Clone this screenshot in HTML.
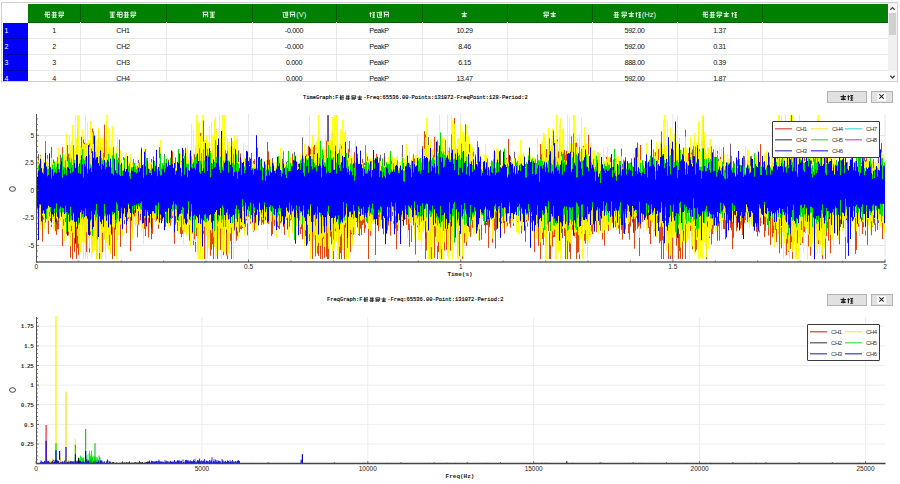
<!DOCTYPE html><html><head><meta charset="utf-8"><style>
*{margin:0;padding:0;box-sizing:border-box}
html,body{width:900px;height:484px;overflow:hidden;background:#fff}
body{position:relative;font-family:"Liberation Sans",sans-serif;color:#222}
.a{position:absolute}
.cj{display:inline-block;position:relative;border:1px solid;vertical-align:middle;margin:0 0.5px}
.cj b{position:absolute;left:1px;right:1px;top:50%;height:1px;margin-top:-0.5px}
.hd{position:absolute;top:4px;height:19px;color:#f0f8f0;font-size:7.5px;line-height:19px;text-align:center;white-space:nowrap}
.cell{position:absolute;height:16px;font-size:7.2px;line-height:18px;text-align:center;white-space:nowrap;color:#111;letter-spacing:-0.35px}
.rn{position:absolute;left:4.5px;font-size:7px;color:#fff;line-height:17.5px}
.mono{font-family:"Liberation Mono",monospace}
.lab{position:absolute;font-size:6.5px;line-height:7px;color:#222;white-space:nowrap}
.btn{position:absolute;background:#e1e1e1;border:1px solid #b4b4b4}
</style></head><body><div class="a" style="left:1px;top:2px;width:897px;height:81px;border:1px solid #cfcfcf;border-top-width:1px"></div><div class="a" style="left:28px;top:4px;width:860px;height:19px;background:#008000"></div><div class="a" style="left:80px;top:4px;width:1px;height:19px;background:#005a00"></div><div class="a" style="left:166px;top:4px;width:1px;height:19px;background:#005a00"></div><div class="a" style="left:252px;top:4px;width:1px;height:19px;background:#005a00"></div><div class="a" style="left:336px;top:4px;width:1px;height:19px;background:#005a00"></div><div class="a" style="left:422px;top:4px;width:1px;height:19px;background:#005a00"></div><div class="a" style="left:507px;top:4px;width:1px;height:19px;background:#005a00"></div><div class="a" style="left:592px;top:4px;width:1px;height:19px;background:#005a00"></div><div class="a" style="left:677px;top:4px;width:1px;height:19px;background:#005a00"></div><div class="a" style="left:762px;top:4px;width:1px;height:19px;background:#005a00"></div><div class="a" style="left:28px;top:22px;width:860px;height:1px;background:#006000"></div><div class="a" style="left:3px;top:23px;width:25px;height:58px;background:#0000ff"></div><div class="a" style="left:3px;top:38px;width:25px;height:1px;background:#0000a8"></div><div class="a" style="left:3px;top:54px;width:25px;height:1px;background:#0000a8"></div><div class="a" style="left:3px;top:70px;width:25px;height:1px;background:#0000a8"></div><div class="a" style="left:28px;top:38px;width:860px;height:1px;background:#e9e9e9"></div><div class="a" style="left:28px;top:54px;width:860px;height:1px;background:#e9e9e9"></div><div class="a" style="left:28px;top:70px;width:860px;height:1px;background:#e9e9e9"></div><div class="a" style="left:80px;top:22px;width:1px;height:59px;background:#e9e9e9"></div><div class="a" style="left:166px;top:22px;width:1px;height:59px;background:#e9e9e9"></div><div class="a" style="left:252px;top:22px;width:1px;height:59px;background:#e9e9e9"></div><div class="a" style="left:336px;top:22px;width:1px;height:59px;background:#e9e9e9"></div><div class="a" style="left:422px;top:22px;width:1px;height:59px;background:#e9e9e9"></div><div class="a" style="left:507px;top:22px;width:1px;height:59px;background:#e9e9e9"></div><div class="a" style="left:592px;top:22px;width:1px;height:59px;background:#e9e9e9"></div><div class="a" style="left:677px;top:22px;width:1px;height:59px;background:#e9e9e9"></div><div class="a" style="left:762px;top:22px;width:1px;height:59px;background:#e9e9e9"></div><div class="hd" style="left:28px;width:52px"><svg width="6.6" height="7" viewBox="-0.5 -0.5 7 7" style="vertical-align:middle;margin:0 0.3px;opacity:0.95"><path d="M0.5 0.5H2.5M1.5 0.5V6M0 3H2.5M3 0.5H6V6H3ZM3 3H6" fill="none" stroke="#f4fff4" stroke-width="1.0"/></svg><svg width="6.6" height="7" viewBox="-0.5 -0.5 7 7" style="vertical-align:middle;margin:0 0.3px;opacity:0.95"><path d="M0.5 1H5.5M2 0V6M4 0V6M0 3.5H6M0.5 6H5.5" fill="none" stroke="#f4fff4" stroke-width="1.0"/></svg><svg width="6.6" height="7" viewBox="-0.5 -0.5 7 7" style="vertical-align:middle;margin:0 0.3px;opacity:0.95"><path d="M0.5 0.5H5.5V2.5H0.5ZM0 4H6M3.5 4V6H2M1.5 4L0.5 6" fill="none" stroke="#f4fff4" stroke-width="1.0"/></svg></div><div class="hd" style="left:80px;width:86px"><svg width="6.6" height="7" viewBox="-0.5 -0.5 7 7" style="vertical-align:middle;margin:0 0.3px;opacity:0.95"><path d="M0 0.5H6M3 0.5V6M0.5 2.5H5.5M1 4.5H5M0.5 6H5.5" fill="none" stroke="#f4fff4" stroke-width="1.0"/></svg><svg width="6.6" height="7" viewBox="-0.5 -0.5 7 7" style="vertical-align:middle;margin:0 0.3px;opacity:0.95"><path d="M0.5 0.5H2.5M1.5 0.5V6M0 3H2.5M3 0.5H6V6H3ZM3 3H6" fill="none" stroke="#f4fff4" stroke-width="1.0"/></svg><svg width="6.6" height="7" viewBox="-0.5 -0.5 7 7" style="vertical-align:middle;margin:0 0.3px;opacity:0.95"><path d="M0.5 1H5.5M2 0V6M4 0V6M0 3.5H6M0.5 6H5.5" fill="none" stroke="#f4fff4" stroke-width="1.0"/></svg><svg width="6.6" height="7" viewBox="-0.5 -0.5 7 7" style="vertical-align:middle;margin:0 0.3px;opacity:0.95"><path d="M0.5 0.5H5.5V2.5H0.5ZM0 4H6M3.5 4V6H2M1.5 4L0.5 6" fill="none" stroke="#f4fff4" stroke-width="1.0"/></svg></div><div class="hd" style="left:166px;width:86px"><svg width="6.6" height="7" viewBox="-0.5 -0.5 7 7" style="vertical-align:middle;margin:0 0.3px;opacity:0.95"><path d="M0 0.5H6M1 0.5V6M1 3H5.5V6M5.5 0.5V3M2.5 4.5H4" fill="none" stroke="#f4fff4" stroke-width="1.0"/></svg><svg width="6.6" height="7" viewBox="-0.5 -0.5 7 7" style="vertical-align:middle;margin:0 0.3px;opacity:0.95"><path d="M0 0.5H6M3 0.5V6M0.5 2.5H5.5M1 4.5H5M0.5 6H5.5" fill="none" stroke="#f4fff4" stroke-width="1.0"/></svg></div><div class="hd" style="left:252px;width:84px"><svg width="6.6" height="7" viewBox="-0.5 -0.5 7 7" style="vertical-align:middle;margin:0 0.3px;opacity:0.95"><path d="M0 1H2.5M1 2V6H6M3 0.5H6M3.5 0.5V4.5H5.5V0.5M3.5 2.5H5.5" fill="none" stroke="#f4fff4" stroke-width="1.0"/></svg><svg width="6.6" height="7" viewBox="-0.5 -0.5 7 7" style="vertical-align:middle;margin:0 0.3px;opacity:0.95"><path d="M0 0.5H6M1 0.5V6M1 3H5.5V6M5.5 0.5V3M2.5 4.5H4" fill="none" stroke="#f4fff4" stroke-width="1.0"/></svg><span style="vertical-align:middle">(V)</span></div><div class="hd" style="left:336px;width:86px"><svg width="6.6" height="7" viewBox="-0.5 -0.5 7 7" style="vertical-align:middle;margin:0 0.3px;opacity:0.95"><path d="M1 0.5V6M0 2H2.5M3 1H6M4.5 1V6M3 3.5H6M3 6H6" fill="none" stroke="#f4fff4" stroke-width="1.0"/></svg><svg width="6.6" height="7" viewBox="-0.5 -0.5 7 7" style="vertical-align:middle;margin:0 0.3px;opacity:0.95"><path d="M0 1H2.5M1 2V6H6M3 0.5H6M3.5 0.5V4.5H5.5V0.5M3.5 2.5H5.5" fill="none" stroke="#f4fff4" stroke-width="1.0"/></svg><svg width="6.6" height="7" viewBox="-0.5 -0.5 7 7" style="vertical-align:middle;margin:0 0.3px;opacity:0.95"><path d="M0 0.5H6M1 0.5V6M1 3H5.5V6M5.5 0.5V3M2.5 4.5H4" fill="none" stroke="#f4fff4" stroke-width="1.0"/></svg></div><div class="hd" style="left:422px;width:85px"><svg width="6.6" height="7" viewBox="-0.5 -0.5 7 7" style="vertical-align:middle;margin:0 0.3px;opacity:0.95"><path d="M3 0V2M0 2H6M1 3.5H5M0.5 5H5.5M3 2V6" fill="none" stroke="#f4fff4" stroke-width="1.0"/></svg></div><div class="hd" style="left:507px;width:85px"><svg width="6.6" height="7" viewBox="-0.5 -0.5 7 7" style="vertical-align:middle;margin:0 0.3px;opacity:0.95"><path d="M0.5 0.5H5.5V2.5H0.5ZM0 4H6M3.5 4V6H2M1.5 4L0.5 6" fill="none" stroke="#f4fff4" stroke-width="1.0"/></svg><svg width="6.6" height="7" viewBox="-0.5 -0.5 7 7" style="vertical-align:middle;margin:0 0.3px;opacity:0.95"><path d="M3 0V2M0 2H6M1 3.5H5M0.5 5H5.5M3 2V6" fill="none" stroke="#f4fff4" stroke-width="1.0"/></svg></div><div class="hd" style="left:592px;width:85px"><svg width="6.6" height="7" viewBox="-0.5 -0.5 7 7" style="vertical-align:middle;margin:0 0.3px;opacity:0.95"><path d="M0.5 1H5.5M2 0V6M4 0V6M0 3.5H6M0.5 6H5.5" fill="none" stroke="#f4fff4" stroke-width="1.0"/></svg><svg width="6.6" height="7" viewBox="-0.5 -0.5 7 7" style="vertical-align:middle;margin:0 0.3px;opacity:0.95"><path d="M0.5 0.5H5.5V2.5H0.5ZM0 4H6M3.5 4V6H2M1.5 4L0.5 6" fill="none" stroke="#f4fff4" stroke-width="1.0"/></svg><svg width="6.6" height="7" viewBox="-0.5 -0.5 7 7" style="vertical-align:middle;margin:0 0.3px;opacity:0.95"><path d="M3 0V2M0 2H6M1 3.5H5M0.5 5H5.5M3 2V6" fill="none" stroke="#f4fff4" stroke-width="1.0"/></svg><svg width="6.6" height="7" viewBox="-0.5 -0.5 7 7" style="vertical-align:middle;margin:0 0.3px;opacity:0.95"><path d="M1 0.5V6M0 2H2.5M3 1H6M4.5 1V6M3 3.5H6M3 6H6" fill="none" stroke="#f4fff4" stroke-width="1.0"/></svg><span style="vertical-align:middle">(Hz)</span></div><div class="hd" style="left:677px;width:85px"><svg width="6.6" height="7" viewBox="-0.5 -0.5 7 7" style="vertical-align:middle;margin:0 0.3px;opacity:0.95"><path d="M0.5 0.5H2.5M1.5 0.5V6M0 3H2.5M3 0.5H6V6H3ZM3 3H6" fill="none" stroke="#f4fff4" stroke-width="1.0"/></svg><svg width="6.6" height="7" viewBox="-0.5 -0.5 7 7" style="vertical-align:middle;margin:0 0.3px;opacity:0.95"><path d="M0.5 1H5.5M2 0V6M4 0V6M0 3.5H6M0.5 6H5.5" fill="none" stroke="#f4fff4" stroke-width="1.0"/></svg><svg width="6.6" height="7" viewBox="-0.5 -0.5 7 7" style="vertical-align:middle;margin:0 0.3px;opacity:0.95"><path d="M0.5 0.5H5.5V2.5H0.5ZM0 4H6M3.5 4V6H2M1.5 4L0.5 6" fill="none" stroke="#f4fff4" stroke-width="1.0"/></svg><svg width="6.6" height="7" viewBox="-0.5 -0.5 7 7" style="vertical-align:middle;margin:0 0.3px;opacity:0.95"><path d="M3 0V2M0 2H6M1 3.5H5M0.5 5H5.5M3 2V6" fill="none" stroke="#f4fff4" stroke-width="1.0"/></svg><svg width="6.6" height="7" viewBox="-0.5 -0.5 7 7" style="vertical-align:middle;margin:0 0.3px;opacity:0.95"><path d="M1 0.5V6M0 2H2.5M3 1H6M4.5 1V6M3 3.5H6M3 6H6" fill="none" stroke="#f4fff4" stroke-width="1.0"/></svg></div><div class="rn" style="top:22px">1</div><div class="cell" style="left:28px;width:52px;top:22px">1</div><div class="cell" style="left:80px;width:86px;top:22px">CH1</div><div class="cell" style="left:252px;width:84px;top:22px">-0.000</div><div class="cell" style="left:336px;width:86px;top:22px">PeakP</div><div class="cell" style="left:422px;width:85px;top:22px">10.29</div><div class="cell" style="left:592px;width:85px;top:22px">592.00</div><div class="cell" style="left:677px;width:85px;top:22px">1.37</div><div class="rn" style="top:38px">2</div><div class="cell" style="left:28px;width:52px;top:38px">2</div><div class="cell" style="left:80px;width:86px;top:38px">CH2</div><div class="cell" style="left:252px;width:84px;top:38px">-0.000</div><div class="cell" style="left:336px;width:86px;top:38px">PeakP</div><div class="cell" style="left:422px;width:85px;top:38px">8.46</div><div class="cell" style="left:592px;width:85px;top:38px">592.00</div><div class="cell" style="left:677px;width:85px;top:38px">0.31</div><div class="rn" style="top:54px">3</div><div class="cell" style="left:28px;width:52px;top:54px">3</div><div class="cell" style="left:80px;width:86px;top:54px">CH3</div><div class="cell" style="left:252px;width:84px;top:54px">0.000</div><div class="cell" style="left:336px;width:86px;top:54px">PeakP</div><div class="cell" style="left:422px;width:85px;top:54px">6.15</div><div class="cell" style="left:592px;width:85px;top:54px">888.00</div><div class="cell" style="left:677px;width:85px;top:54px">0.39</div><div class="rn" style="top:70px">4</div><div class="cell" style="left:28px;width:52px;top:70px">4</div><div class="cell" style="left:80px;width:86px;top:70px">CH4</div><div class="cell" style="left:252px;width:84px;top:70px">0.000</div><div class="cell" style="left:336px;width:86px;top:70px">PeakP</div><div class="cell" style="left:422px;width:85px;top:70px">13.47</div><div class="cell" style="left:592px;width:85px;top:70px">592.00</div><div class="cell" style="left:677px;width:85px;top:70px">1.87</div><div class="a" style="left:2px;top:82px;width:897px;height:3px;background:#fff"></div><div class="a" style="left:1px;top:81px;width:897px;height:1px;background:#cfcfcf"></div><div class="a" style="left:888px;top:3px;width:9px;height:78px;background:#f0f0f0"></div><div class="a" style="left:889px;top:13px;width:7px;height:22px;background:#d0d0d0"></div><svg class="a" style="left:888px;top:3px" width="9" height="78"><rect x="0" y="1" width="9" height="9" fill="#f8f8f8"/><rect x="0" y="68" width="9" height="10" fill="#f8f8f8"/><path d="M2.3 6.8 L4.5 4.6 L6.7 6.8" fill="none" stroke="#444" stroke-width="1.3"/><path d="M2.3 72.8 L4.5 75 L6.7 72.8" fill="none" stroke="#444" stroke-width="1.3"/></svg><div class="a mono" style="left:303px;top:94px;height:8px;line-height:8px;font-size:5.38px;color:#000;white-space:nowrap;font-weight:normal;-webkit-text-stroke:0.15px #000">TimeGraph:F<svg width="5.6" height="5.6" viewBox="-0.5 -0.5 7 7" style="vertical-align:middle;margin:0 0.3px;opacity:1.0"><path d="M0.5 0.5H2.5M1.5 0.5V6M0 3H2.5M3 0.5H6V6H3ZM3 3H6" fill="none" stroke="#111" stroke-width="1.0"/></svg><svg width="5.6" height="5.6" viewBox="-0.5 -0.5 7 7" style="vertical-align:middle;margin:0 0.3px;opacity:1.0"><path d="M0.5 1H5.5M2 0V6M4 0V6M0 3.5H6M0.5 6H5.5" fill="none" stroke="#111" stroke-width="1.0"/></svg><svg width="5.6" height="5.6" viewBox="-0.5 -0.5 7 7" style="vertical-align:middle;margin:0 0.3px;opacity:1.0"><path d="M0.5 0.5H5.5V2.5H0.5ZM0 4H6M3.5 4V6H2M1.5 4L0.5 6" fill="none" stroke="#111" stroke-width="1.0"/></svg><svg width="5.6" height="5.6" viewBox="-0.5 -0.5 7 7" style="vertical-align:middle;margin:0 0.3px;opacity:1.0"><path d="M3 0V2M0 2H6M1 3.5H5M0.5 5H5.5M3 2V6" fill="none" stroke="#111" stroke-width="1.0"/></svg>-Freq:65536.00-Points:131072-FreqPoint:128-Period:2</div><div class="btn" style="left:827px;top:91px;width:40px;height:12px;text-align:center;line-height:9px"><svg width="6.6" height="7" viewBox="-0.5 -0.5 7 7" style="vertical-align:middle;margin:0 0.3px;opacity:1.0"><path d="M3 0V2M0 2H6M1 3.5H5M0.5 5H5.5M3 2V6" fill="none" stroke="#222" stroke-width="1.15"/></svg><svg width="6.6" height="7" viewBox="-0.5 -0.5 7 7" style="vertical-align:middle;margin:0 0.3px;opacity:1.0"><path d="M1 0.5V6M0 2H2.5M3 1H6M4.5 1V6M3 3.5H6M3 6H6" fill="none" stroke="#222" stroke-width="1.15"/></svg></div><div class="btn" style="left:871px;top:91px;width:22px;height:12px"></div><div class="a" style="left:877px;top:93px;width:9px;height:8px;background:#fff"></div><svg class="a" style="left:877px;top:93px" width="9" height="8"><path d="M2.3 1.3 L6.7 5.7 M6.7 1.3 L2.3 5.7" stroke="#222" stroke-width="1.05"/></svg><svg class="a" style="left:0;top:0" width="900" height="484"><line x1="37" y1="135.4" x2="885" y2="135.4" stroke="#e6e6e6" stroke-width="1"/><line x1="37" y1="162.9" x2="885" y2="162.9" stroke="#e6e6e6" stroke-width="1"/><line x1="37" y1="217.9" x2="885" y2="217.9" stroke="#e6e6e6" stroke-width="1"/><line x1="37" y1="245.4" x2="885" y2="245.4" stroke="#e6e6e6" stroke-width="1"/><line x1="248.6" y1="114" x2="248.6" y2="262" stroke="#e6e6e6" stroke-width="1"/><line x1="460.7" y1="114" x2="460.7" y2="262" stroke="#e6e6e6" stroke-width="1"/><line x1="672.9" y1="114" x2="672.9" y2="262" stroke="#e6e6e6" stroke-width="1"/><line x1="885.0" y1="114" x2="885.0" y2="262" stroke="#e6e6e6" stroke-width="1"/><g><path d="M36.5 168.6V216.1M37.5 172.8V213.9M38.5 172.2V218.9M39.5 180.5V219.0M40.5 155.1V224.4M41.5 161.4V222.6M42.5 171.7V241.6M43.5 164.4V219.6M44.5 168.0V209.4M45.5 172.9V222.7M46.5 162.8V216.0M47.5 171.5V223.6M48.5 171.7V234.2M49.5 174.1V216.4M50.5 166.6V221.0M51.5 170.1V227.1M52.5 165.9V214.1M53.5 172.7V224.1M54.5 168.6V227.9M55.5 173.6V231.2M56.5 163.3V234.9M57.5 168.0V229.6M58.5 166.0V229.4M59.5 163.4V212.7M60.5 174.3V206.0M61.5 157.5V218.5M62.5 147.1V246.2M63.5 175.4V225.8M64.5 173.4V210.6M65.5 173.0V222.4M66.5 156.2V233.8M67.5 145.0V216.7M68.5 153.7V235.3M69.5 152.9V223.9M70.5 153.4V257.7M71.5 157.4V231.4M72.5 165.3V259.1M73.5 145.0V224.5M74.5 167.1V251.9M75.5 159.8V240.1M76.5 146.5V258.8M77.5 127.8V248.3M78.5 166.1V255.2M79.5 166.3V240.8M80.5 150.6V220.7M81.5 136.7V225.7M82.5 159.2V224.4M83.5 139.4V225.3M84.5 170.4V236.4M85.5 138.1V256.2M86.5 143.6V252.0M87.5 172.2V243.2M88.5 156.3V229.0M89.5 143.5V252.6M90.5 140.7V234.9M91.5 148.4V245.1M92.5 128.6V251.0M93.5 131.4V239.3M94.5 164.0V246.1M95.5 141.8V234.7M96.5 147.9V259.1M97.5 146.4V259.1M98.5 129.6V224.0M99.5 147.1V259.1M100.5 142.9V226.1M101.5 164.2V259.1M102.5 147.4V252.2M103.5 153.2V220.4M104.5 124.6V238.7M105.5 157.1V249.9M106.5 140.1V239.1M107.5 153.2V230.0M108.5 161.6V238.7M109.5 154.6V245.5M110.5 164.3V253.4M111.5 171.5V235.1M112.5 169.8V259.1M113.5 146.9V227.2M114.5 159.5V256.0M115.5 157.7V229.1M116.5 162.2V212.8M117.5 169.9V241.1M118.5 157.6V211.0M119.5 163.7V215.0M120.5 169.8V246.9M121.5 167.9V218.6M122.5 172.7V230.8M123.5 156.9V216.3M124.5 159.1V224.2M125.5 172.6V214.3M126.5 156.6V233.2M127.5 172.7V220.9M128.5 167.4V218.8M129.5 174.1V221.6M130.5 170.8V251.3M131.5 169.3V226.7M132.5 172.2V231.3M133.5 173.5V212.5M134.5 173.4V216.5M135.5 174.1V225.0M136.5 177.5V208.6M137.5 171.3V237.3M138.5 167.2V224.6M139.5 163.3V221.7M140.5 165.4V220.1M141.5 147.4V219.7M142.5 167.8V217.4M143.5 172.5V238.0M144.5 154.3V229.0M145.5 175.4V236.0M146.5 162.9V219.1M147.5 175.0V214.6M148.5 167.5V237.5M149.5 179.0V212.2M150.5 163.5V216.6M151.5 170.8V229.3M152.5 175.0V233.8M153.5 156.4V211.6M154.5 164.5V219.4M155.5 169.5V222.1M156.5 174.0V220.6M157.5 170.1V214.7M158.5 170.8V228.8M159.5 164.8V217.3M160.5 164.3V219.6M161.5 173.6V206.4M162.5 172.9V220.8M163.5 172.9V208.0M164.5 176.6V229.2M165.5 173.2V226.9M166.5 170.4V217.4M167.5 165.0V223.5M168.5 159.7V223.0M169.5 174.1V220.6M170.5 165.9V225.7M171.5 172.1V221.0M172.5 151.4V218.1M173.5 169.8V215.7M174.5 166.1V243.7M175.5 174.3V224.8M176.5 173.7V222.8M177.5 166.0V231.1M178.5 170.5V220.8M179.5 164.0V219.8M180.5 174.4V233.9M181.5 161.3V237.3M182.5 171.8V233.9M183.5 149.9V214.8M184.5 169.4V231.8M185.5 147.8V226.3M186.5 173.8V234.0M187.5 157.5V222.6M188.5 167.4V228.6M189.5 153.9V240.6M190.5 163.1V223.3M191.5 165.8V219.4M192.5 159.7V233.6M193.5 153.8V245.2M194.5 154.2V239.4M195.5 148.5V251.8M196.5 170.8V236.0M197.5 160.8V252.3M198.5 155.2V237.9M199.5 175.6V224.1M200.5 132.9V252.3M201.5 155.2V236.8M202.5 162.1V232.3M203.5 120.4V233.8M204.5 149.7V259.1M205.5 156.7V241.3M206.5 164.1V230.1M207.5 153.8V253.9M208.5 157.0V239.5M209.5 167.5V232.3M210.5 150.9V255.8M211.5 156.0V249.7M212.5 164.1V244.2M213.5 158.7V259.1M214.5 163.1V246.8M215.5 147.3V246.1M216.5 142.2V239.9M217.5 148.3V259.1M218.5 152.5V239.2M219.5 150.2V234.8M220.5 145.3V249.8M221.5 135.6V231.0M222.5 130.9V234.5M223.5 151.9V255.3M224.5 151.4V234.9M225.5 171.4V220.7M226.5 158.7V255.6M227.5 145.1V259.1M228.5 163.4V241.3M229.5 167.7V218.3M230.5 157.8V240.9M231.5 138.0V259.1M232.5 162.2V224.5M233.5 148.6V235.2M234.5 145.6V230.5M235.5 169.9V233.4M236.5 162.2V240.7M237.5 164.1V236.0M238.5 158.0V233.3M239.5 171.4V232.4M240.5 153.4V228.9M241.5 166.1V229.4M242.5 175.9V228.0M243.5 178.0V223.6M244.5 170.2V231.5M245.5 158.5V227.2M246.5 168.0V220.2M247.5 168.8V235.4M248.5 170.6V216.7M249.5 162.9V220.7M250.5 167.1V223.7M251.5 167.3V209.1M252.5 175.0V218.8M253.5 160.8V231.8M254.5 159.2V230.5M255.5 176.4V212.6M256.5 149.3V215.1M257.5 164.8V213.4M258.5 172.6V219.9M259.5 178.7V221.3M260.5 165.3V210.1M261.5 166.1V225.0M262.5 173.2V222.5M263.5 178.4V221.2M264.5 161.6V216.2M265.5 173.2V220.2M266.5 172.5V209.1M267.5 142.1V224.1M268.5 151.5V223.9M269.5 163.0V220.9M270.5 172.5V212.7M271.5 165.4V236.1M272.5 180.0V234.2M273.5 169.2V208.6M274.5 174.0V225.9M275.5 176.4V223.3M276.5 177.6V205.3M277.5 166.3V227.0M278.5 169.2V228.5M279.5 168.8V229.3M280.5 163.9V223.4M281.5 174.3V216.4M282.5 176.2V217.5M283.5 178.2V227.1M284.5 171.7V234.9M285.5 164.4V217.8M286.5 170.6V219.8M287.5 164.9V229.4M288.5 175.6V207.7M289.5 171.8V226.8M290.5 173.5V220.3M291.5 175.8V208.4M292.5 153.5V231.4M293.5 161.5V215.7M294.5 170.9V232.3M295.5 172.8V241.3M296.5 166.8V215.1M297.5 173.3V214.5M298.5 163.8V229.9M299.5 173.9V212.5M300.5 168.4V233.9M301.5 171.2V229.0M302.5 169.7V239.3M303.5 157.2V219.8M304.5 175.1V245.9M305.5 165.0V236.2M306.5 154.3V239.2M307.5 161.3V244.4M308.5 145.7V217.7M309.5 145.8V241.3M310.5 148.5V222.2M311.5 153.5V246.0M312.5 150.2V259.1M313.5 146.7V236.0M314.5 144.9V239.3M315.5 153.6V256.4M316.5 169.7V228.6M317.5 152.1V253.6M318.5 148.9V255.9M319.5 167.3V240.3M320.5 166.8V259.1M321.5 155.0V254.2M322.5 155.0V259.1M323.5 158.4V238.6M324.5 159.2V257.8M325.5 149.4V242.9M326.5 140.7V256.7M327.5 115.1V259.1M328.5 148.1V259.1M329.5 149.4V224.7M330.5 151.8V236.7M331.5 141.4V244.4M332.5 133.5V242.6M333.5 151.9V259.1M334.5 153.2V241.7M335.5 152.3V231.4M336.5 145.7V239.9M337.5 154.6V233.0M338.5 153.9V248.1M339.5 166.8V259.1M340.5 143.9V253.1M341.5 145.8V259.1M342.5 162.5V219.5M343.5 159.3V236.2M344.5 159.7V259.1M345.5 144.8V222.2M346.5 158.9V238.4M347.5 159.9V248.1M348.5 149.1V234.5M349.5 141.0V236.3M350.5 168.5V252.2M351.5 166.5V234.2M352.5 172.2V238.7M353.5 169.7V234.5M354.5 152.1V221.2M355.5 144.4V217.2M356.5 176.8V222.2M357.5 163.5V227.5M358.5 165.5V223.6M359.5 169.5V235.8M360.5 167.4V228.7M361.5 174.8V235.1M362.5 158.8V225.0M363.5 172.3V217.7M364.5 168.6V232.8M365.5 164.7V228.3M366.5 171.1V216.1M367.5 178.0V219.3M368.5 172.6V259.1M369.5 164.4V202.4M370.5 170.2V235.8M371.5 168.1V223.4M372.5 175.3V222.0M373.5 168.9V219.9M374.5 164.7V218.1M375.5 169.6V255.0M376.5 153.9V218.6M377.5 171.0V219.7M378.5 175.3V231.0M379.5 177.7V226.3M380.5 161.3V220.8M381.5 170.2V219.8M382.5 162.5V212.0M383.5 166.8V234.4M384.5 156.9V213.8M385.5 160.3V206.0M386.5 172.0V233.9M387.5 168.1V230.2M388.5 161.9V225.6M389.5 176.2V217.7M390.5 158.6V235.7M391.5 160.8V213.5M392.5 162.8V207.0M393.5 171.0V223.7M394.5 167.9V230.8M395.5 175.7V228.6M396.5 169.5V249.3M397.5 173.1V231.1M398.5 169.3V220.1M399.5 172.6V220.4M400.5 168.0V231.8M401.5 161.0V221.6M402.5 176.3V221.0M403.5 163.0V209.3M404.5 179.0V219.7M405.5 179.4V212.1M406.5 170.4V224.8M407.5 169.5V223.7M408.5 165.9V230.2M409.5 177.5V246.8M410.5 169.2V222.4M411.5 168.0V241.9M412.5 159.0V214.2M413.5 169.1V225.4M414.5 158.5V235.2M415.5 168.5V254.5M416.5 169.5V220.6M417.5 170.6V227.3M418.5 159.7V232.6M419.5 169.5V231.5M420.5 170.3V220.5M421.5 161.7V217.1M422.5 146.1V218.6M423.5 162.6V229.7M424.5 131.2V217.8M425.5 134.6V259.1M426.5 149.0V250.5M427.5 150.8V215.0M428.5 143.4V228.1M429.5 159.7V259.1M430.5 165.8V259.1M431.5 162.1V259.1M432.5 149.3V232.3M433.5 169.9V230.6M434.5 136.8V257.8M435.5 149.4V236.8M436.5 155.0V232.1M437.5 140.5V259.1M438.5 158.8V251.9M439.5 156.7V254.2M440.5 143.0V252.7M441.5 159.6V259.1M442.5 164.9V238.6M443.5 173.3V228.1M444.5 159.5V250.6M445.5 157.7V231.8M446.5 167.4V249.9M447.5 147.0V231.4M448.5 151.5V245.5M449.5 163.2V224.0M450.5 160.7V250.8M451.5 148.6V237.7M452.5 167.3V231.4M453.5 149.6V223.7M454.5 118.1V239.3M455.5 169.9V224.1M456.5 156.3V222.2M457.5 160.8V254.3M458.5 161.5V244.9M459.5 153.0V256.1M460.5 165.7V227.2M461.5 144.5V218.3M462.5 157.1V258.9M463.5 153.4V246.6M464.5 152.2V242.8M465.5 124.3V235.5M466.5 158.6V246.1M467.5 162.9V225.5M468.5 166.3V229.2M469.5 162.0V232.1M470.5 145.9V236.9M471.5 167.2V229.7M472.5 152.9V227.8M473.5 151.7V218.3M474.5 173.3V217.7M475.5 154.4V221.0M476.5 171.8V212.9M477.5 141.2V230.8M478.5 170.0V217.1M479.5 172.1V240.6M480.5 178.4V211.0M481.5 175.8V239.9M482.5 172.7V215.4M483.5 174.9V214.9M484.5 176.0V225.1M485.5 173.5V233.3M486.5 170.4V221.8M487.5 158.5V219.0M488.5 177.9V247.9M489.5 172.8V227.2M490.5 174.9V212.4M491.5 177.3V219.5M492.5 176.3V242.7M493.5 174.7V225.2M494.5 164.9V230.7M495.5 171.0V248.4M496.5 172.9V216.7M497.5 165.7V225.6M498.5 168.0V216.1M499.5 171.2V221.8M500.5 167.3V227.4M501.5 174.4V211.5M502.5 165.6V223.2M503.5 166.7V223.2M504.5 172.2V233.6M505.5 176.1V216.7M506.5 157.9V211.8M507.5 169.2V225.8M508.5 139.0V212.8M509.5 173.5V223.6M510.5 163.8V227.7M511.5 172.3V214.5M512.5 168.2V220.7M513.5 164.0V213.4M514.5 174.2V203.8M515.5 170.4V210.7M516.5 168.8V207.2M517.5 169.1V222.0M518.5 165.7V213.2M519.5 162.3V220.5M520.5 163.9V221.6M521.5 168.0V233.7M522.5 171.8V219.0M523.5 175.7V218.3M524.5 173.7V227.2M525.5 172.6V241.9M526.5 164.2V221.6M527.5 171.4V226.6M528.5 174.7V220.7M529.5 164.5V216.5M530.5 173.5V211.4M531.5 170.2V222.6M532.5 169.0V220.8M533.5 165.0V221.3M534.5 177.4V252.1M535.5 171.2V223.2M536.5 163.2V232.2M537.5 169.0V223.6M538.5 170.8V245.9M539.5 166.6V224.5M540.5 144.0V259.1M541.5 168.5V226.7M542.5 152.9V239.0M543.5 156.5V245.0M544.5 164.6V228.2M545.5 150.5V248.2M546.5 149.0V241.9M547.5 160.0V225.3M548.5 168.2V231.0M549.5 138.3V259.1M550.5 154.3V259.1M551.5 145.6V231.7M552.5 166.7V246.5M553.5 135.5V231.1M554.5 151.0V237.0M555.5 148.7V230.6M556.5 160.6V228.4M557.5 139.5V236.0M558.5 151.4V228.2M559.5 137.3V232.1M560.5 164.9V249.9M561.5 151.7V232.8M562.5 150.0V229.1M563.5 165.1V221.9M564.5 149.9V236.0M565.5 155.5V259.1M566.5 150.8V241.4M567.5 146.2V259.1M568.5 171.2V242.2M569.5 133.6V252.1M570.5 148.6V259.1M571.5 136.3V228.7M572.5 149.9V229.9M573.5 160.8V224.7M574.5 153.5V236.4M575.5 153.8V237.9M576.5 142.6V259.1M577.5 143.1V252.9M578.5 153.0V252.2M579.5 139.3V259.1M580.5 151.8V223.5M581.5 162.6V233.3M582.5 163.3V235.4M583.5 145.8V222.8M584.5 168.4V240.9M585.5 150.2V243.8M586.5 155.2V223.6M587.5 161.8V255.2M588.5 134.8V214.8M589.5 164.5V234.6M590.5 174.1V225.8M591.5 158.5V231.5M592.5 170.5V234.0M593.5 162.1V231.5M594.5 171.7V229.1M595.5 165.0V222.4M596.5 170.2V232.2M597.5 172.3V219.5M598.5 172.8V207.8M599.5 171.5V225.2M600.5 169.3V213.9M601.5 160.1V223.0M602.5 171.2V239.6M603.5 170.3V223.3M604.5 165.6V245.6M605.5 166.0V210.1M606.5 156.7V224.3M607.5 165.7V226.0M608.5 169.4V231.1M609.5 159.5V215.7M610.5 157.7V223.4M611.5 172.5V223.0M612.5 168.8V222.7M613.5 177.9V211.2M614.5 171.9V209.1M615.5 174.6V227.3M616.5 171.1V225.3M617.5 172.6V222.2M618.5 170.8V228.5M619.5 170.5V233.9M620.5 166.5V212.6M621.5 168.4V230.2M622.5 173.0V239.6M623.5 176.4V233.2M624.5 160.6V228.0M625.5 158.9V229.4M626.5 172.5V210.9M627.5 166.1V217.6M628.5 177.4V233.4M629.5 177.5V239.7M630.5 171.4V226.7M631.5 158.4V218.0M632.5 175.4V220.8M633.5 174.4V231.4M634.5 157.1V248.6M635.5 178.7V230.7M636.5 165.4V217.6M637.5 166.5V228.8M638.5 171.0V226.7M639.5 168.5V256.1M640.5 145.0V228.6M641.5 175.6V222.7M642.5 171.5V221.9M643.5 171.0V212.7M644.5 173.4V213.9M645.5 176.4V218.4M646.5 156.6V215.7M647.5 167.9V224.9M648.5 174.6V227.9M649.5 172.0V234.0M650.5 165.8V244.1M651.5 165.7V226.3M652.5 176.3V222.2M653.5 166.4V210.0M654.5 166.1V230.9M655.5 163.9V236.6M656.5 164.6V226.7M657.5 176.9V223.1M658.5 148.9V224.3M659.5 163.9V243.3M660.5 144.3V241.2M661.5 131.3V259.1M662.5 158.9V240.4M663.5 167.0V259.1M664.5 145.6V224.6M665.5 150.8V220.9M666.5 161.0V234.5M667.5 167.4V236.8M668.5 140.4V259.1M669.5 145.3V233.8M670.5 157.5V230.7M671.5 163.5V250.7M672.5 164.9V259.1M673.5 154.7V227.3M674.5 134.1V229.5M675.5 166.8V231.6M676.5 152.7V245.8M677.5 164.1V259.1M678.5 151.9V259.1M679.5 138.6V251.1M680.5 153.4V258.9M681.5 164.5V233.8M682.5 155.6V259.1M683.5 147.7V240.9M684.5 161.8V225.4M685.5 129.8V259.1M686.5 159.7V215.5M687.5 157.1V237.6M688.5 152.9V231.0M689.5 149.3V218.3M690.5 145.7V230.9M691.5 152.5V236.7M692.5 168.3V249.3M693.5 162.1V228.1M694.5 157.6V245.2M695.5 153.5V251.8M696.5 164.2V249.7M697.5 165.7V234.6M698.5 138.5V228.2M699.5 148.9V230.5M700.5 169.0V242.4M701.5 159.3V233.4M702.5 141.5V227.0M703.5 117.1V222.6M704.5 139.5V232.7M705.5 150.4V228.2M706.5 172.7V259.1M707.5 162.8V224.8M708.5 148.5V218.7M709.5 173.4V238.1M710.5 162.8V227.7M711.5 153.8V244.4M712.5 153.8V234.1M713.5 169.3V224.7M714.5 160.9V223.1M715.5 152.5V220.8M716.5 167.9V226.4M717.5 175.3V222.4M718.5 166.4V226.3M719.5 169.6V240.7M720.5 156.8V218.8M721.5 166.1V217.2M722.5 173.2V218.4M723.5 147.1V228.9M724.5 171.4V229.3M725.5 166.0V239.4M726.5 164.8V229.6M727.5 163.8V223.2M728.5 168.6V226.7M729.5 165.7V211.8M730.5 170.0V227.8M731.5 176.9V223.6M732.5 171.1V249.1M733.5 171.0V237.9M734.5 170.9V215.0M735.5 168.9V216.9M736.5 173.3V231.3M737.5 159.8V207.3M738.5 157.5V214.3M739.5 179.8V225.5M740.5 169.8V228.5M741.5 173.8V223.6M742.5 181.0V235.0M743.5 167.1V219.4M744.5 173.3V222.8M745.5 172.0V220.1M746.5 173.5V213.1M747.5 161.9V222.3M748.5 160.6V217.1M749.5 168.0V222.6M750.5 165.1V204.8M751.5 170.5V222.9M752.5 168.9V217.1M753.5 173.9V216.6M754.5 169.6V222.4M755.5 173.8V217.8M756.5 167.3V232.0M757.5 164.0V236.4M758.5 167.7V231.5M759.5 160.9V232.5M760.5 144.1V226.0M761.5 179.3V222.6M762.5 169.4V212.1M763.5 172.6V219.0M764.5 171.7V237.1M765.5 176.4V230.8M766.5 168.3V218.6M767.5 170.5V225.1M768.5 172.8V235.5M769.5 168.8V222.1M770.5 172.3V244.8M771.5 178.9V218.0M772.5 157.3V237.3M773.5 163.6V233.1M774.5 170.8V231.0M775.5 160.3V230.0M776.5 162.4V241.9M777.5 176.4V209.7M778.5 148.7V233.3M779.5 171.6V253.3M780.5 163.4V234.2M781.5 157.2V248.3M782.5 131.8V231.8M783.5 148.2V236.0M784.5 127.5V236.9M785.5 161.1V233.0M786.5 161.1V255.0M787.5 142.9V243.5M788.5 129.9V251.9M789.5 156.8V256.2M790.5 160.9V248.8M791.5 115.1V242.2M792.5 157.8V258.9M793.5 144.0V244.4M794.5 156.1V241.7M795.5 141.6V233.4M796.5 153.6V257.5M797.5 150.8V243.4M798.5 142.6V234.7M799.5 155.5V236.5M800.5 175.3V244.8M801.5 164.8V230.1M802.5 157.7V243.2M803.5 163.9V243.3M804.5 132.2V231.9M805.5 164.3V232.9M806.5 164.9V223.5M807.5 154.5V228.1M808.5 152.9V246.5M809.5 149.8V234.4M810.5 148.5V255.8M811.5 162.8V229.5M812.5 168.2V238.5M813.5 141.4V221.7M814.5 163.5V259.1M815.5 123.0V229.2M816.5 155.0V237.1M817.5 134.9V244.7M818.5 153.3V244.1M819.5 156.2V234.2M820.5 162.2V221.3M821.5 169.2V231.6M822.5 165.8V259.1M823.5 145.9V236.0M824.5 167.7V226.2M825.5 166.6V259.1M826.5 154.1V236.2M827.5 150.6V228.2M828.5 171.8V240.6M829.5 171.8V234.2M830.5 157.4V253.4M831.5 176.3V217.3M832.5 162.3V230.6M833.5 169.9V214.2M834.5 176.2V229.8M835.5 169.9V219.2M836.5 173.7V219.7M837.5 165.3V222.9M838.5 163.7V233.6M839.5 156.6V244.3M840.5 167.7V222.4M841.5 168.3V221.4M842.5 171.8V218.2M843.5 169.6V227.8M844.5 161.8V214.1M845.5 178.7V259.1M846.5 164.7V220.0M847.5 172.6V243.2M848.5 169.3V223.6M849.5 167.6V211.3M850.5 163.8V210.1M851.5 168.2V218.2M852.5 172.1V215.8M853.5 167.8V219.6M854.5 169.7V212.6M855.5 171.0V254.0M856.5 168.5V249.9M857.5 163.7V208.6M858.5 169.0V226.7M859.5 168.8V235.4M860.5 176.4V218.7M861.5 170.6V219.7M862.5 178.6V233.9M863.5 164.9V227.2M864.5 174.9V212.1M865.5 160.1V235.6M866.5 139.9V217.4M867.5 172.1V245.1M868.5 159.7V213.8M869.5 167.2V206.1M870.5 173.0V222.6M871.5 174.4V235.4M872.5 166.1V226.9M873.5 159.1V223.1M874.5 167.5V214.1M875.5 177.3V231.5M876.5 175.4V208.3M877.5 171.2V230.0M878.5 159.5V212.0M879.5 168.0V216.4M880.5 167.7V211.3M881.5 160.8V214.0M882.5 171.1V239.1M883.5 170.4V212.2M884.5 170.9V223.3" fill="none" stroke="#e04810" stroke-width="1.0" opacity="1.0"/><path d="M36.5 172.3V230.7M37.5 169.5V213.7M38.5 154.2V209.0M39.5 163.6V208.4M40.5 177.0V204.6M41.5 168.4V215.0M42.5 172.1V221.8M43.5 167.4V210.4M44.5 176.8V206.8M45.5 166.7V214.4M46.5 166.8V212.6M47.5 155.1V211.7M48.5 166.2V215.6M49.5 164.7V212.7M50.5 176.3V210.3M51.5 147.0V219.9M52.5 177.7V203.4M53.5 159.6V206.7M54.5 170.1V210.9M55.5 172.8V205.9M56.5 172.0V224.5M57.5 172.1V203.5M58.5 164.9V217.6M59.5 168.4V216.7M60.5 154.8V215.4M61.5 177.2V215.6M62.5 164.0V210.3M63.5 172.8V210.2M64.5 161.0V224.6M65.5 176.6V212.5M66.5 168.9V205.4M67.5 156.9V207.7M68.5 172.5V208.5M69.5 156.3V219.6M70.5 154.9V229.7M71.5 157.3V211.9M72.5 158.7V216.6M73.5 169.6V220.5M74.5 165.1V236.4M75.5 167.3V230.3M76.5 157.9V224.0M77.5 155.2V237.8M78.5 169.5V211.8M79.5 169.8V226.1M80.5 170.4V206.5M81.5 167.7V221.1M82.5 164.8V230.0M83.5 166.8V221.0M84.5 142.6V221.6M85.5 167.6V229.7M86.5 164.0V218.6M87.5 158.5V221.0M88.5 171.6V211.1M89.5 163.6V223.1M90.5 161.6V209.8M91.5 158.8V219.9M92.5 173.6V217.4M93.5 153.3V215.8M94.5 166.9V216.6M95.5 160.5V224.0M96.5 151.4V224.9M97.5 154.2V221.1M98.5 151.4V212.3M99.5 157.8V216.5M100.5 164.2V211.7M101.5 147.9V210.6M102.5 169.2V228.9M103.5 155.2V228.2M104.5 167.6V223.3M105.5 166.3V228.6M106.5 141.9V208.6M107.5 156.4V220.2M108.5 161.7V208.3M109.5 148.1V220.2M110.5 167.9V220.6M111.5 155.8V210.8M112.5 171.9V218.7M113.5 166.2V214.8M114.5 174.6V217.8M115.5 174.7V229.5M116.5 171.4V205.6M117.5 166.5V214.2M118.5 159.5V219.3M119.5 139.6V210.5M120.5 171.1V212.2M121.5 158.9V208.4M122.5 169.3V211.2M123.5 167.8V218.2M124.5 175.8V224.0M125.5 175.7V215.2M126.5 172.2V223.4M127.5 173.5V213.4M128.5 168.3V204.4M129.5 172.2V217.9M130.5 158.3V202.9M131.5 167.2V212.2M132.5 167.2V212.6M133.5 159.2V206.5M134.5 164.6V211.2M135.5 168.6V209.4M136.5 169.0V213.5M137.5 169.2V210.7M138.5 160.0V216.6M139.5 162.6V210.2M140.5 165.8V216.6M141.5 162.4V212.5M142.5 171.7V214.1M143.5 164.7V213.2M144.5 176.0V209.7M145.5 157.4V220.7M146.5 167.8V216.4M147.5 167.2V202.0M148.5 164.1V206.0M149.5 168.5V226.2M150.5 170.0V210.8M151.5 159.0V239.3M152.5 167.6V215.4M153.5 173.7V215.5M154.5 165.3V209.8M155.5 177.2V211.1M156.5 154.2V213.5M157.5 169.5V219.0M158.5 168.1V213.1M159.5 147.1V212.2M160.5 148.4V207.1M161.5 167.6V209.7M162.5 163.9V209.9M163.5 159.9V211.6M164.5 153.9V208.3M165.5 169.2V206.5M166.5 167.5V210.4M167.5 158.6V201.3M168.5 166.5V204.7M169.5 162.6V207.7M170.5 163.9V214.7M171.5 174.7V208.2M172.5 173.3V206.3M173.5 180.2V216.6M174.5 169.4V211.5M175.5 157.3V222.6M176.5 174.3V211.0M177.5 158.3V208.1M178.5 160.0V210.2M179.5 168.4V226.1M180.5 167.0V226.4M181.5 167.3V213.1M182.5 172.5V219.7M183.5 166.6V205.4M184.5 165.7V221.8M185.5 162.3V216.9M186.5 158.5V213.2M187.5 167.9V212.8M188.5 160.7V214.5M189.5 171.4V211.6M190.5 167.9V219.7M191.5 163.0V210.5M192.5 166.1V226.5M193.5 167.5V209.3M194.5 164.4V219.4M195.5 167.5V221.4M196.5 167.8V224.4M197.5 164.8V225.2M198.5 142.9V210.7M199.5 164.9V212.9M200.5 144.8V224.8M201.5 162.3V206.2M202.5 175.3V220.6M203.5 165.1V210.1M204.5 142.4V216.3M205.5 161.2V226.9M206.5 146.5V228.6M207.5 167.1V217.7M208.5 152.8V231.4M209.5 148.3V221.9M210.5 151.7V206.9M211.5 161.4V212.2M212.5 148.8V218.8M213.5 158.3V216.0M214.5 169.7V211.5M215.5 157.4V216.4M216.5 162.2V248.5M217.5 164.5V211.3M218.5 155.7V223.0M219.5 158.0V209.0M220.5 177.1V220.4M221.5 151.3V221.6M222.5 157.3V213.5M223.5 165.1V218.3M224.5 157.3V234.3M225.5 163.5V217.3M226.5 173.6V232.6M227.5 155.5V217.9M228.5 165.7V231.4M229.5 161.7V206.2M230.5 165.3V216.0M231.5 168.9V210.4M232.5 150.6V212.8M233.5 155.4V214.8M234.5 157.2V228.6M235.5 166.4V232.1M236.5 172.4V234.7M237.5 160.5V218.5M238.5 150.4V215.3M239.5 175.9V203.0M240.5 157.9V212.1M241.5 178.4V209.1M242.5 169.0V219.6M243.5 164.8V207.4M244.5 175.5V207.8M245.5 175.9V208.1M246.5 166.3V216.7M247.5 161.5V213.5M248.5 171.1V207.8M249.5 157.3V203.9M250.5 172.7V208.9M251.5 153.1V208.5M252.5 167.5V208.9M253.5 166.7V212.7M254.5 163.9V216.9M255.5 166.1V217.4M256.5 152.1V208.3M257.5 147.7V207.8M258.5 164.5V223.6M259.5 169.5V210.6M260.5 174.9V217.0M261.5 172.8V213.3M262.5 168.3V214.6M263.5 169.0V224.5M264.5 168.7V210.8M265.5 168.4V220.2M266.5 164.9V215.8M267.5 175.7V211.4M268.5 174.2V209.6M269.5 159.6V209.2M270.5 162.1V220.8M271.5 171.7V219.4M272.5 158.0V207.6M273.5 172.4V215.0M274.5 170.0V203.5M275.5 177.7V212.7M276.5 162.0V229.7M277.5 168.5V206.1M278.5 160.1V214.3M279.5 163.2V208.9M280.5 167.7V212.9M281.5 167.3V206.7M282.5 158.8V213.6M283.5 169.4V201.7M284.5 169.3V210.8M285.5 167.8V210.5M286.5 162.2V211.8M287.5 161.1V229.4M288.5 151.0V206.2M289.5 168.6V208.5M290.5 157.8V206.4M291.5 172.0V215.7M292.5 163.5V212.8M293.5 167.0V206.9M294.5 151.9V219.6M295.5 163.0V214.8M296.5 170.6V224.4M297.5 162.6V218.1M298.5 164.1V213.9M299.5 168.1V209.8M300.5 168.1V203.1M301.5 166.5V210.9M302.5 137.3V222.6M303.5 165.4V214.7M304.5 157.5V210.0M305.5 165.6V218.8M306.5 173.2V219.6M307.5 166.3V243.3M308.5 158.2V211.0M309.5 158.6V213.7M310.5 166.9V211.1M311.5 159.9V210.3M312.5 151.0V221.4M313.5 171.0V216.3M314.5 153.0V206.1M315.5 171.6V231.2M316.5 162.6V234.3M317.5 155.3V222.8M318.5 147.6V212.5M319.5 162.7V211.5M320.5 162.8V233.7M321.5 155.4V217.0M322.5 160.4V211.8M323.5 164.2V213.7M324.5 164.0V233.2M325.5 167.7V215.3M326.5 160.2V222.3M327.5 157.3V209.9M328.5 115.1V214.7M329.5 150.7V209.9M330.5 151.0V228.6M331.5 163.3V210.3M332.5 164.4V232.8M333.5 158.1V207.6M334.5 173.3V218.7M335.5 145.5V226.7M336.5 168.8V215.6M337.5 170.1V216.8M338.5 165.1V211.8M339.5 147.1V212.2M340.5 153.1V213.2M341.5 167.9V206.4M342.5 162.4V220.0M343.5 162.3V208.7M344.5 171.4V220.1M345.5 164.3V227.6M346.5 165.9V226.2M347.5 174.8V209.4M348.5 153.8V214.3M349.5 174.9V230.5M350.5 164.8V223.5M351.5 171.7V218.5M352.5 165.8V203.1M353.5 167.3V210.4M354.5 161.0V233.7M355.5 173.8V215.7M356.5 164.9V209.7M357.5 153.7V213.0M358.5 171.7V235.0M359.5 167.3V223.1M360.5 163.0V205.4M361.5 171.5V205.8M362.5 164.5V212.4M363.5 172.1V223.3M364.5 162.9V207.8M365.5 167.5V208.7M366.5 173.6V200.5M367.5 156.6V208.2M368.5 168.8V215.8M369.5 170.0V215.7M370.5 173.6V204.2M371.5 171.2V217.0M372.5 168.9V206.9M373.5 167.1V204.3M374.5 159.7V214.7M375.5 175.5V203.4M376.5 170.5V208.6M377.5 158.8V206.5M378.5 167.1V210.3M379.5 165.4V212.5M380.5 154.8V208.6M381.5 166.0V206.6M382.5 165.0V208.2M383.5 168.6V200.6M384.5 152.9V210.3M385.5 160.1V228.3M386.5 172.6V213.5M387.5 164.4V219.8M388.5 174.8V211.5M389.5 159.8V211.6M390.5 163.4V214.5M391.5 169.4V216.2M392.5 170.8V216.0M393.5 177.5V207.0M394.5 162.7V211.8M395.5 169.1V204.1M396.5 170.3V219.3M397.5 163.0V211.5M398.5 172.3V210.0M399.5 171.9V205.1M400.5 172.5V214.9M401.5 175.7V219.1M402.5 144.9V215.2M403.5 169.6V220.0M404.5 170.4V207.5M405.5 161.3V218.6M406.5 181.8V211.9M407.5 168.5V200.2M408.5 168.1V213.9M409.5 173.8V206.5M410.5 164.8V211.8M411.5 177.6V209.0M412.5 166.9V207.6M413.5 161.3V221.0M414.5 179.0V210.3M415.5 175.4V213.6M416.5 167.9V218.4M417.5 167.6V212.1M418.5 171.3V209.6M419.5 165.6V217.8M420.5 164.0V213.6M421.5 175.6V210.8M422.5 164.4V220.2M423.5 172.2V230.6M424.5 174.4V222.4M425.5 179.4V238.5M426.5 155.6V227.1M427.5 162.5V215.9M428.5 136.9V215.6M429.5 174.3V212.8M430.5 166.4V224.9M431.5 163.8V215.9M432.5 162.5V220.4M433.5 154.9V233.4M434.5 165.7V215.7M435.5 170.5V209.0M436.5 176.7V213.0M437.5 172.2V216.5M438.5 150.6V227.8M439.5 159.6V214.2M440.5 139.0V221.5M441.5 168.3V212.4M442.5 166.0V219.6M443.5 172.0V217.2M444.5 159.2V231.7M445.5 166.5V211.9M446.5 163.6V222.3M447.5 149.7V209.8M448.5 171.5V210.7M449.5 161.1V219.0M450.5 174.5V218.1M451.5 144.9V226.9M452.5 169.6V204.4M453.5 166.0V216.2M454.5 159.2V213.2M455.5 146.8V212.1M456.5 164.8V212.3M457.5 166.9V221.3M458.5 172.0V214.2M459.5 163.3V221.8M460.5 160.4V231.0M461.5 163.7V217.0M462.5 160.1V238.0M463.5 154.2V223.5M464.5 166.9V218.1M465.5 162.5V221.2M466.5 151.0V224.9M467.5 173.4V212.8M468.5 156.0V226.1M469.5 144.1V210.3M470.5 169.7V216.3M471.5 162.2V219.4M472.5 169.1V218.9M473.5 165.8V207.2M474.5 169.0V206.3M475.5 166.2V206.6M476.5 173.5V213.6M477.5 173.2V214.1M478.5 171.1V217.5M479.5 173.1V204.5M480.5 172.4V215.0M481.5 170.2V220.7M482.5 175.1V213.7M483.5 170.1V212.9M484.5 165.9V218.8M485.5 179.6V226.0M486.5 168.0V224.9M487.5 173.5V225.4M488.5 175.3V205.7M489.5 176.3V224.6M490.5 174.1V210.7M491.5 173.6V219.0M492.5 167.1V209.0M493.5 176.0V215.3M494.5 161.8V209.2M495.5 174.0V210.9M496.5 164.7V229.9M497.5 161.3V206.0M498.5 175.9V220.3M499.5 161.4V213.2M500.5 149.8V206.5M501.5 171.9V223.4M502.5 165.1V213.0M503.5 169.9V209.4M504.5 168.5V215.1M505.5 170.1V208.0M506.5 171.9V227.1M507.5 163.6V204.8M508.5 162.3V209.6M509.5 168.8V202.8M510.5 156.3V214.5M511.5 160.3V219.0M512.5 163.5V219.9M513.5 172.8V225.9M514.5 151.8V212.8M515.5 158.0V210.0M516.5 178.9V220.0M517.5 174.7V209.2M518.5 171.4V215.3M519.5 161.4V210.0M520.5 158.6V208.6M521.5 170.3V212.6M522.5 166.8V222.0M523.5 163.3V220.1M524.5 175.3V214.2M525.5 164.1V200.8M526.5 170.3V213.3M527.5 166.8V216.1M528.5 168.0V217.3M529.5 174.7V209.0M530.5 172.7V222.9M531.5 167.2V217.0M532.5 167.2V203.8M533.5 168.8V219.8M534.5 159.0V230.0M535.5 169.7V218.3M536.5 173.1V209.2M537.5 169.0V230.9M538.5 168.0V223.5M539.5 164.6V207.3M540.5 157.6V228.0M541.5 162.1V221.8M542.5 158.0V217.8M543.5 160.4V210.9M544.5 164.0V205.4M545.5 152.4V216.9M546.5 166.3V234.6M547.5 161.2V219.4M548.5 170.6V222.5M549.5 160.3V212.4M550.5 167.6V216.0M551.5 160.6V226.9M552.5 146.9V210.2M553.5 130.4V237.4M554.5 152.6V228.9M555.5 153.5V220.3M556.5 158.4V214.7M557.5 162.1V210.4M558.5 164.1V216.5M559.5 166.3V207.5M560.5 166.5V216.5M561.5 169.7V218.0M562.5 150.9V238.3M563.5 166.7V219.7M564.5 163.5V207.2M565.5 156.8V219.2M566.5 166.3V216.3M567.5 166.4V214.0M568.5 164.0V216.9M569.5 160.4V210.5M570.5 161.0V215.6M571.5 157.7V215.1M572.5 165.1V221.7M573.5 171.9V210.5M574.5 153.7V220.8M575.5 173.3V201.6M576.5 160.7V226.4M577.5 170.0V217.9M578.5 166.0V222.9M579.5 165.6V213.4M580.5 152.2V223.2M581.5 176.6V228.4M582.5 150.6V225.8M583.5 168.6V217.7M584.5 155.1V216.9M585.5 157.9V209.6M586.5 171.5V222.1M587.5 157.5V225.2M588.5 162.2V213.9M589.5 167.7V225.6M590.5 170.4V215.7M591.5 164.5V217.1M592.5 165.6V222.9M593.5 175.2V218.9M594.5 156.1V215.5M595.5 163.9V206.6M596.5 177.5V208.2M597.5 171.3V207.5M598.5 152.7V218.8M599.5 153.9V198.3M600.5 166.1V230.8M601.5 176.6V207.5M602.5 169.2V221.0M603.5 159.7V214.8M604.5 165.3V216.3M605.5 170.2V205.4M606.5 172.5V220.5M607.5 161.9V211.8M608.5 169.5V217.0M609.5 165.8V207.1M610.5 164.5V212.3M611.5 154.0V208.3M612.5 166.9V214.6M613.5 166.3V217.5M614.5 177.4V211.0M615.5 159.3V215.6M616.5 161.3V216.1M617.5 168.2V212.1M618.5 179.1V210.7M619.5 171.6V202.8M620.5 167.6V220.7M621.5 148.6V213.6M622.5 163.8V210.9M623.5 162.1V213.9M624.5 161.9V209.3M625.5 157.1V210.5M626.5 174.6V216.0M627.5 173.2V204.5M628.5 174.8V210.5M629.5 170.0V214.1M630.5 170.4V204.3M631.5 167.5V206.4M632.5 174.1V222.5M633.5 167.5V232.9M634.5 173.2V214.7M635.5 148.4V217.5M636.5 171.4V207.6M637.5 142.6V223.7M638.5 154.1V212.3M639.5 174.9V213.4M640.5 160.7V215.6M641.5 163.6V209.3M642.5 176.4V208.6M643.5 163.7V212.6M644.5 168.5V206.9M645.5 165.5V209.6M646.5 173.1V200.8M647.5 168.5V207.1M648.5 164.7V216.3M649.5 168.1V221.5M650.5 171.6V217.3M651.5 168.1V208.0M652.5 173.6V214.3M653.5 164.9V208.1M654.5 179.7V207.2M655.5 152.2V221.0M656.5 165.0V211.2M657.5 161.6V213.6M658.5 160.4V216.4M659.5 170.6V222.9M660.5 143.4V220.9M661.5 171.1V214.3M662.5 160.2V216.9M663.5 161.1V217.8M664.5 145.4V225.2M665.5 166.1V204.4M666.5 170.4V223.4M667.5 163.7V217.5M668.5 178.3V214.0M669.5 165.6V234.2M670.5 164.8V259.1M671.5 151.4V234.9M672.5 167.5V214.8M673.5 167.5V228.3M674.5 168.4V225.2M675.5 168.9V222.6M676.5 166.2V206.4M677.5 156.1V225.4M678.5 167.3V238.1M679.5 167.8V228.3M680.5 168.8V237.1M681.5 162.7V226.6M682.5 165.0V223.4M683.5 171.7V234.8M684.5 169.9V212.1M685.5 165.4V215.2M686.5 156.7V212.4M687.5 157.1V222.7M688.5 165.3V210.3M689.5 171.9V222.1M690.5 172.3V212.5M691.5 158.2V232.7M692.5 149.4V212.3M693.5 160.0V223.8M694.5 151.5V219.9M695.5 168.7V217.5M696.5 168.3V214.9M697.5 144.8V217.8M698.5 170.0V216.4M699.5 160.2V220.6M700.5 159.1V213.6M701.5 162.6V217.6M702.5 148.2V215.3M703.5 169.9V218.3M704.5 169.3V212.5M705.5 174.8V204.9M706.5 172.1V210.8M707.5 166.5V227.2M708.5 167.1V212.7M709.5 162.0V228.4M710.5 164.6V208.8M711.5 171.3V213.1M712.5 177.2V205.2M713.5 162.9V225.8M714.5 163.3V205.8M715.5 173.5V217.3M716.5 172.3V215.5M717.5 150.8V240.7M718.5 159.0V223.6M719.5 158.5V218.6M720.5 162.8V215.9M721.5 166.8V229.1M722.5 171.0V210.5M723.5 163.7V206.4M724.5 169.3V219.4M725.5 170.9V212.3M726.5 168.3V208.6M727.5 168.8V215.0M728.5 161.6V216.2M729.5 173.9V204.5M730.5 143.7V219.9M731.5 174.2V230.3M732.5 171.0V210.2M733.5 161.1V204.6M734.5 173.3V214.4M735.5 171.4V211.8M736.5 168.2V218.3M737.5 181.4V219.6M738.5 171.5V211.8M739.5 174.0V225.2M740.5 170.0V203.0M741.5 164.8V208.4M742.5 163.7V213.9M743.5 155.8V215.4M744.5 156.4V212.0M745.5 160.3V215.8M746.5 168.7V205.6M747.5 160.2V201.6M748.5 174.1V218.8M749.5 169.0V223.5M750.5 156.4V212.7M751.5 162.4V206.2M752.5 176.0V208.5M753.5 172.0V217.2M754.5 161.4V214.2M755.5 163.8V223.5M756.5 159.8V227.0M757.5 177.5V222.8M758.5 175.4V211.4M759.5 169.9V221.2M760.5 173.9V216.5M761.5 168.5V214.5M762.5 168.2V214.4M763.5 165.6V212.3M764.5 169.1V207.3M765.5 164.0V215.7M766.5 161.8V208.5M767.5 166.4V213.1M768.5 173.5V219.1M769.5 156.5V219.4M770.5 166.1V204.9M771.5 164.5V209.2M772.5 162.4V207.3M773.5 174.7V215.2M774.5 157.7V209.5M775.5 169.7V221.4M776.5 173.9V211.2M777.5 153.5V217.0M778.5 169.0V210.0M779.5 161.6V209.8M780.5 159.5V216.3M781.5 151.6V219.7M782.5 176.0V206.1M783.5 168.3V216.6M784.5 151.3V206.0M785.5 169.0V217.1M786.5 177.4V204.8M787.5 160.8V212.5M788.5 156.5V226.5M789.5 143.2V245.2M790.5 160.7V212.8M791.5 155.7V233.3M792.5 157.9V212.8M793.5 166.3V217.3M794.5 169.5V221.2M795.5 153.3V215.2M796.5 160.6V217.0M797.5 168.9V219.0M798.5 155.3V228.1M799.5 157.8V226.1M800.5 154.7V213.0M801.5 168.4V212.1M802.5 164.1V210.6M803.5 160.9V215.5M804.5 172.3V219.8M805.5 159.2V222.3M806.5 172.1V219.5M807.5 154.7V216.8M808.5 159.5V211.8M809.5 165.5V216.4M810.5 147.3V221.0M811.5 160.4V223.8M812.5 161.0V236.1M813.5 171.2V229.1M814.5 153.6V215.4M815.5 152.1V218.9M816.5 134.8V215.7M817.5 168.4V218.0M818.5 143.2V218.3M819.5 148.8V232.5M820.5 159.0V216.5M821.5 163.8V222.0M822.5 167.8V222.3M823.5 167.0V222.7M824.5 168.1V235.7M825.5 163.6V211.1M826.5 160.3V224.2M827.5 168.9V206.0M828.5 174.2V214.4M829.5 169.3V209.1M830.5 172.1V207.5M831.5 153.3V214.8M832.5 174.3V207.0M833.5 164.3V212.7M834.5 161.4V201.3M835.5 172.5V225.8M836.5 160.2V201.7M837.5 168.7V208.9M838.5 171.5V227.3M839.5 173.5V206.6M840.5 167.6V227.0M841.5 159.9V221.3M842.5 178.0V212.4M843.5 164.1V210.3M844.5 169.6V211.1M845.5 172.7V214.3M846.5 169.3V219.8M847.5 168.7V223.0M848.5 168.9V202.3M849.5 162.7V218.9M850.5 173.9V216.9M851.5 151.0V205.8M852.5 161.9V219.1M853.5 172.3V219.4M854.5 178.3V219.3M855.5 168.8V212.0M856.5 171.2V218.2M857.5 163.2V221.9M858.5 163.3V208.6M859.5 151.5V209.4M860.5 169.4V208.9M861.5 162.7V221.6M862.5 171.2V212.6M863.5 170.9V208.2M864.5 155.6V206.7M865.5 169.4V205.5M866.5 169.2V213.9M867.5 170.7V218.6M868.5 166.2V222.4M869.5 164.2V206.8M870.5 169.2V206.9M871.5 174.9V207.0M872.5 166.1V207.4M873.5 173.3V204.5M874.5 170.7V224.8M875.5 166.9V215.5M876.5 166.7V209.2M877.5 179.5V200.7M878.5 153.6V223.0M879.5 162.4V217.7M880.5 150.8V213.0M881.5 143.2V217.2M882.5 173.8V208.2M883.5 171.9V216.7M884.5 166.7V208.9" fill="none" stroke="#503070" stroke-width="1.0" opacity="0.8"/><path d="M36.5 160.0V209.5M37.5 156.5V219.5M38.5 160.1V221.9M39.5 169.6V229.7M40.5 155.8V230.8M41.5 159.3V225.8M42.5 165.6V215.6M43.5 158.3V217.5M44.5 159.9V229.3M45.5 160.3V216.1M46.5 162.1V219.6M47.5 158.5V232.7M48.5 166.5V220.8M49.5 163.1V212.1M50.5 165.2V218.1M51.5 157.8V224.9M52.5 161.8V218.9M53.5 163.2V229.4M54.5 166.5V231.2M55.5 163.4V218.4M56.5 161.2V218.4M57.5 162.5V220.4M58.5 147.9V215.0M59.5 150.9V226.6M60.5 172.0V220.4M61.5 167.6V231.9M62.5 158.9V229.1M63.5 159.3V219.2M64.5 154.6V240.8M65.5 151.5V218.0M66.5 133.7V222.0M67.5 161.2V221.0M68.5 159.0V231.6M69.5 135.0V229.0M70.5 144.8V246.2M71.5 141.1V225.9M72.5 125.0V232.7M73.5 162.5V246.8M74.5 148.2V238.2M75.5 115.1V243.7M76.5 138.0V226.9M77.5 115.1V236.2M78.5 115.1V243.9M79.5 152.8V259.1M80.5 145.8V252.3M81.5 147.7V245.5M82.5 129.5V240.8M83.5 143.2V259.1M84.5 144.0V243.2M85.5 115.1V259.1M86.5 144.4V232.3M87.5 122.0V259.1M88.5 140.1V238.2M89.5 146.9V248.2M90.5 121.0V231.6M91.5 153.0V257.4M92.5 132.2V253.1M93.5 144.1V252.5M94.5 158.3V250.4M95.5 135.1V241.9M96.5 140.1V259.1M97.5 138.2V259.1M98.5 127.9V235.3M99.5 130.6V253.0M100.5 137.9V259.1M101.5 148.2V259.1M102.5 137.7V232.7M103.5 136.3V250.4M104.5 157.4V239.3M105.5 148.1V259.1M106.5 115.1V243.3M107.5 142.0V247.7M108.5 127.9V249.9M109.5 136.0V234.8M110.5 147.1V253.6M111.5 139.1V231.2M112.5 126.3V227.2M113.5 164.7V233.3M114.5 153.2V227.6M115.5 150.6V220.5M116.5 147.0V259.1M117.5 137.1V249.5M118.5 166.1V235.2M119.5 161.9V221.2M120.5 150.3V224.4M121.5 153.0V223.6M122.5 164.0V236.2M123.5 160.0V218.6M124.5 156.8V220.3M125.5 151.9V222.4M126.5 153.2V220.9M127.5 158.7V217.8M128.5 162.4V217.3M129.5 162.2V229.0M130.5 154.1V217.0M131.5 173.4V228.7M132.5 162.8V238.5M133.5 161.8V230.8M134.5 169.9V210.3M135.5 159.8V226.4M136.5 166.2V224.0M137.5 156.1V224.5M138.5 163.1V211.0M139.5 157.6V226.1M140.5 153.2V213.8M141.5 159.7V230.7M142.5 167.4V228.7M143.5 170.6V244.2M144.5 148.4V217.8M145.5 163.1V211.5M146.5 166.5V228.5M147.5 161.4V227.0M148.5 163.6V217.8M149.5 156.3V231.3M150.5 162.1V225.4M151.5 162.3V212.6M152.5 166.6V218.0M153.5 159.1V217.4M154.5 168.3V219.5M155.5 157.7V221.6M156.5 150.6V215.9M157.5 170.6V218.9M158.5 174.5V224.6M159.5 158.1V219.8M160.5 140.0V218.5M161.5 168.1V218.3M162.5 169.3V219.6M163.5 158.2V209.6M164.5 167.2V221.4M165.5 165.3V214.0M166.5 164.4V221.1M167.5 158.6V211.8M168.5 164.7V227.5M169.5 160.3V222.4M170.5 163.2V212.5M171.5 166.4V222.9M172.5 163.9V215.7M173.5 167.4V237.4M174.5 161.4V224.5M175.5 168.2V216.1M176.5 166.7V222.8M177.5 149.7V222.0M178.5 161.3V234.0M179.5 154.9V225.9M180.5 153.5V227.1M181.5 162.2V215.9M182.5 160.7V230.3M183.5 156.3V244.4M184.5 154.4V232.5M185.5 160.4V228.5M186.5 149.1V235.9M187.5 145.6V219.1M188.5 159.3V233.2M189.5 153.0V224.9M190.5 155.2V246.4M191.5 124.3V234.1M192.5 160.1V224.0M193.5 130.3V240.8M194.5 166.0V219.7M195.5 145.3V242.0M196.5 115.1V227.6M197.5 123.5V254.3M198.5 122.1V259.1M199.5 124.2V259.1M200.5 136.0V259.1M201.5 131.6V250.3M202.5 115.1V259.1M203.5 141.5V231.1M204.5 140.1V226.7M205.5 141.7V259.1M206.5 135.0V235.9M207.5 147.1V259.1M208.5 141.9V248.3M209.5 125.5V237.2M210.5 151.6V230.2M211.5 120.8V233.0M212.5 135.5V227.1M213.5 152.4V237.1M214.5 119.6V246.8M215.5 116.9V259.1M216.5 129.2V255.8M217.5 149.1V226.3M218.5 158.3V250.2M219.5 115.1V239.4M220.5 137.9V228.5M221.5 155.1V259.1M222.5 115.1V251.3M223.5 137.5V251.7M224.5 115.1V252.6M225.5 132.8V226.6M226.5 153.5V229.8M227.5 138.1V255.5M228.5 141.9V253.2M229.5 169.8V253.8M230.5 147.0V233.6M231.5 149.8V227.5M232.5 141.2V234.1M233.5 149.4V259.1M234.5 135.3V212.0M235.5 149.3V243.1M236.5 139.4V227.2M237.5 136.1V231.3M238.5 161.8V237.7M239.5 149.9V215.7M240.5 160.0V226.5M241.5 159.7V225.3M242.5 166.5V227.0M243.5 143.1V228.7M244.5 157.3V235.7M245.5 162.1V218.8M246.5 157.1V219.1M247.5 164.3V223.4M248.5 161.8V212.6M249.5 165.0V225.8M250.5 162.8V221.5M251.5 168.4V212.9M252.5 164.8V229.9M253.5 163.4V231.3M254.5 164.2V212.7M255.5 161.8V224.4M256.5 163.9V230.1M257.5 156.9V226.5M258.5 164.3V214.1M259.5 163.2V212.0M260.5 166.3V219.3M261.5 165.5V216.9M262.5 169.4V220.0M263.5 158.8V219.4M264.5 168.8V223.9M265.5 166.8V216.5M266.5 159.9V219.0M267.5 159.6V249.1M268.5 164.8V219.2M269.5 172.8V225.5M270.5 159.5V222.1M271.5 160.6V221.6M272.5 170.1V214.4M273.5 156.9V223.9M274.5 166.5V219.7M275.5 168.7V226.2M276.5 161.7V237.9M277.5 163.5V221.3M278.5 161.0V225.7M279.5 171.0V213.8M280.5 147.8V220.9M281.5 165.9V232.8M282.5 170.6V219.7M283.5 158.0V216.0M284.5 164.4V221.5M285.5 160.0V219.2M286.5 164.0V218.6M287.5 162.1V217.8M288.5 160.4V237.7M289.5 166.4V215.2M290.5 156.9V219.0M291.5 164.7V217.4M292.5 165.3V233.1M293.5 159.3V220.5M294.5 157.0V232.0M295.5 155.6V224.4M296.5 165.4V225.8M297.5 153.5V213.6M298.5 166.9V236.8M299.5 164.5V234.1M300.5 153.7V227.0M301.5 156.4V224.4M302.5 157.3V223.6M303.5 153.3V222.5M304.5 143.7V246.2M305.5 157.5V230.3M306.5 156.2V233.5M307.5 147.0V224.8M308.5 155.6V238.6M309.5 115.1V234.1M310.5 154.1V259.1M311.5 143.7V250.7M312.5 135.0V229.9M313.5 149.2V237.6M314.5 154.2V238.9M315.5 143.4V235.1M316.5 141.7V252.2M317.5 138.8V245.8M318.5 115.1V243.0M319.5 136.2V253.6M320.5 141.6V245.6M321.5 142.5V255.3M322.5 148.5V237.8M323.5 146.5V236.6M324.5 149.6V247.0M325.5 133.8V259.1M326.5 157.8V224.9M327.5 141.3V233.2M328.5 141.5V248.8M329.5 133.8V256.7M330.5 139.1V225.7M331.5 131.7V232.0M332.5 117.0V259.1M333.5 133.1V251.1M334.5 115.1V248.6M335.5 151.9V228.6M336.5 115.1V241.2M337.5 115.1V259.1M338.5 153.1V259.1M339.5 143.5V247.1M340.5 129.5V236.4M341.5 148.7V234.1M342.5 119.5V249.9M343.5 146.5V256.3M344.5 132.5V225.2M345.5 130.2V222.9M346.5 153.4V259.1M347.5 137.2V238.1M348.5 157.8V259.1M349.5 152.3V246.2M350.5 154.9V230.0M351.5 148.3V232.5M352.5 157.6V246.2M353.5 154.6V227.6M354.5 168.1V233.8M355.5 140.4V232.9M356.5 159.9V221.2M357.5 159.4V214.4M358.5 163.1V234.0M359.5 160.0V214.2M360.5 159.8V220.5M361.5 166.6V221.2M362.5 162.9V219.9M363.5 161.0V219.5M364.5 164.9V214.0M365.5 154.9V224.6M366.5 153.5V221.6M367.5 160.7V220.9M368.5 158.8V229.0M369.5 169.6V228.8M370.5 157.8V231.2M371.5 162.2V236.1M372.5 159.0V223.4M373.5 149.8V211.3M374.5 173.8V221.6M375.5 160.6V220.2M376.5 168.6V220.5M377.5 158.2V216.2M378.5 169.6V214.6M379.5 165.4V226.0M380.5 161.0V227.5M381.5 158.1V213.3M382.5 161.9V224.0M383.5 167.0V218.9M384.5 165.7V217.5M385.5 156.0V225.1M386.5 162.4V219.7M387.5 171.4V216.5M388.5 156.3V220.4M389.5 159.5V209.1M390.5 156.1V216.3M391.5 164.4V217.2M392.5 156.5V211.9M393.5 168.4V221.2M394.5 158.4V221.9M395.5 165.3V216.2M396.5 157.6V218.9M397.5 155.0V225.0M398.5 166.7V228.2M399.5 162.6V215.2M400.5 162.0V222.4M401.5 153.4V228.0M402.5 156.9V220.0M403.5 169.0V215.2M404.5 158.9V215.3M405.5 156.7V218.1M406.5 144.1V213.9M407.5 170.9V238.6M408.5 164.2V218.6M409.5 151.3V224.0M410.5 168.3V222.6M411.5 168.3V225.6M412.5 156.7V218.5M413.5 152.7V215.7M414.5 163.6V238.9M415.5 155.7V222.7M416.5 155.4V223.3M417.5 134.1V225.8M418.5 157.0V240.3M419.5 150.1V230.9M420.5 162.9V240.7M421.5 155.3V249.4M422.5 157.0V231.1M423.5 141.0V232.1M424.5 148.6V228.2M425.5 137.6V221.3M426.5 117.9V232.3M427.5 142.1V235.4M428.5 144.8V259.1M429.5 148.5V259.1M430.5 139.0V259.1M431.5 149.4V247.3M432.5 148.7V259.1M433.5 148.5V234.9M434.5 157.4V226.0M435.5 139.0V227.2M436.5 159.3V241.8M437.5 151.8V245.9M438.5 145.1V242.2M439.5 115.1V259.1M440.5 140.2V259.1M441.5 139.5V249.0M442.5 137.6V259.1M443.5 145.8V230.6M444.5 138.4V242.3M445.5 153.3V232.8M446.5 155.4V228.9M447.5 115.1V256.4M448.5 152.1V259.1M449.5 147.2V233.2M450.5 156.7V221.4M451.5 115.1V240.7M452.5 120.2V259.1M453.5 149.6V248.6M454.5 123.5V228.2M455.5 141.1V241.0M456.5 147.6V227.6M457.5 139.4V259.1M458.5 138.3V259.1M459.5 142.5V230.8M460.5 123.9V229.7M461.5 147.7V238.5M462.5 131.2V256.5M463.5 150.3V258.5M464.5 134.0V233.2M465.5 141.7V240.0M466.5 124.7V241.9M467.5 156.0V242.1M468.5 136.1V236.4M469.5 152.1V225.8M470.5 143.9V222.9M471.5 155.9V234.6M472.5 147.3V220.2M473.5 156.1V233.7M474.5 166.4V234.4M475.5 166.5V228.1M476.5 161.6V227.3M477.5 163.0V221.7M478.5 150.4V240.2M479.5 149.1V229.1M480.5 154.2V218.2M481.5 158.6V224.8M482.5 164.5V216.2M483.5 160.7V219.4M484.5 154.6V221.9M485.5 143.9V221.3M486.5 155.4V222.8M487.5 163.9V214.5M488.5 161.9V209.7M489.5 165.1V217.7M490.5 166.8V214.5M491.5 163.5V215.5M492.5 161.0V238.7M493.5 147.6V228.9M494.5 162.0V218.7M495.5 152.1V211.6M496.5 148.3V212.3M497.5 161.8V222.4M498.5 149.8V228.1M499.5 157.3V218.0M500.5 164.9V220.8M501.5 160.6V221.6M502.5 162.2V228.0M503.5 163.8V209.5M504.5 163.6V220.9M505.5 161.4V222.7M506.5 159.4V227.0M507.5 167.5V222.7M508.5 162.4V213.3M509.5 170.6V216.2M510.5 160.6V211.1M511.5 158.0V221.2M512.5 161.3V221.2M513.5 160.4V223.5M514.5 158.3V214.0M515.5 166.3V213.1M516.5 163.8V232.3M517.5 158.8V221.1M518.5 155.0V234.5M519.5 159.6V223.1M520.5 139.8V211.6M521.5 162.8V226.0M522.5 154.7V230.2M523.5 152.3V217.5M524.5 162.4V209.9M525.5 166.9V225.7M526.5 168.4V219.9M527.5 160.0V222.8M528.5 152.5V207.1M529.5 158.5V225.7M530.5 157.7V208.6M531.5 163.1V216.0M532.5 156.6V230.3M533.5 170.3V211.3M534.5 157.9V214.9M535.5 159.1V224.5M536.5 166.4V238.8M537.5 137.1V240.1M538.5 159.4V222.3M539.5 156.6V238.0M540.5 159.3V242.5M541.5 145.7V231.1M542.5 140.8V232.6M543.5 133.1V228.0M544.5 133.6V236.9M545.5 136.3V258.3M546.5 157.5V259.1M547.5 143.6V247.6M548.5 127.9V220.1M549.5 153.8V232.4M550.5 146.4V245.1M551.5 138.3V251.1M552.5 128.6V231.3M553.5 145.3V235.1M554.5 139.9V229.7M555.5 142.7V259.1M556.5 115.1V259.1M557.5 141.4V250.8M558.5 158.1V251.9M559.5 123.3V247.4M560.5 118.1V259.1M561.5 156.3V225.2M562.5 129.4V229.0M563.5 127.8V239.0M564.5 160.0V227.9M565.5 153.2V229.5M566.5 160.7V259.1M567.5 115.1V240.7M568.5 150.8V244.5M569.5 117.6V241.8M570.5 143.4V243.5M571.5 152.3V239.1M572.5 143.3V224.9M573.5 115.1V224.7M574.5 115.1V232.6M575.5 137.0V237.7M576.5 147.1V232.3M577.5 137.8V226.8M578.5 157.1V235.2M579.5 133.2V254.5M580.5 151.6V238.8M581.5 117.5V232.5M582.5 146.1V259.1M583.5 147.1V227.5M584.5 127.2V233.9M585.5 138.1V230.2M586.5 143.7V239.5M587.5 154.4V258.2M588.5 154.3V242.5M589.5 162.7V234.1M590.5 144.7V236.6M591.5 142.7V225.0M592.5 150.7V224.3M593.5 157.0V234.6M594.5 150.4V219.3M595.5 157.9V224.5M596.5 163.5V220.8M597.5 151.7V221.7M598.5 152.6V233.5M599.5 153.1V217.9M600.5 164.4V208.5M601.5 160.0V232.3M602.5 162.6V233.0M603.5 147.4V224.3M604.5 160.7V230.4M605.5 171.8V215.2M606.5 159.2V229.6M607.5 146.7V234.5M608.5 157.1V224.9M609.5 155.9V222.1M610.5 162.0V230.0M611.5 172.5V228.7M612.5 171.9V215.3M613.5 169.3V230.7M614.5 163.1V225.4M615.5 160.2V221.0M616.5 157.5V230.2M617.5 164.4V226.8M618.5 155.4V225.4M619.5 164.1V216.6M620.5 166.5V226.1M621.5 156.3V213.2M622.5 167.7V219.0M623.5 175.4V210.4M624.5 168.4V210.3M625.5 161.7V223.0M626.5 176.6V219.3M627.5 164.6V220.4M628.5 164.4V224.1M629.5 170.2V222.3M630.5 170.4V214.4M631.5 165.2V220.4M632.5 165.7V219.4M633.5 152.9V216.5M634.5 159.8V219.0M635.5 170.9V217.5M636.5 167.3V215.8M637.5 157.3V217.8M638.5 146.9V221.7M639.5 159.7V237.8M640.5 160.1V214.9M641.5 147.0V223.8M642.5 161.9V211.9M643.5 163.7V233.2M644.5 169.6V218.1M645.5 164.5V221.4M646.5 143.3V230.6M647.5 169.7V228.8M648.5 161.5V212.6M649.5 169.4V226.8M650.5 159.4V220.5M651.5 154.2V226.3M652.5 159.3V222.7M653.5 151.1V238.0M654.5 151.8V230.5M655.5 156.1V222.0M656.5 142.1V237.5M657.5 151.4V215.8M658.5 160.0V224.1M659.5 159.5V227.3M660.5 141.3V226.7M661.5 150.6V223.3M662.5 148.1V227.1M663.5 119.9V236.1M664.5 115.1V239.0M665.5 134.1V217.9M666.5 145.4V250.5M667.5 121.2V239.9M668.5 153.5V243.3M669.5 144.9V240.4M670.5 127.4V255.6M671.5 142.0V259.1M672.5 141.1V237.7M673.5 151.8V250.3M674.5 134.1V237.6M675.5 137.6V229.3M676.5 141.6V224.1M677.5 115.1V259.1M678.5 148.3V228.5M679.5 139.1V234.1M680.5 149.5V247.6M681.5 160.9V237.5M682.5 151.6V241.4M683.5 164.3V230.7M684.5 147.2V242.3M685.5 136.5V224.4M686.5 147.8V242.6M687.5 156.6V240.1M688.5 161.0V238.9M689.5 157.0V259.1M690.5 136.7V225.7M691.5 154.3V245.6M692.5 163.0V246.3M693.5 142.1V236.3M694.5 133.2V254.0M695.5 160.2V228.5M696.5 142.4V240.0M697.5 148.1V229.9M698.5 121.6V259.1M699.5 151.5V233.3M700.5 150.8V257.7M701.5 137.3V233.0M702.5 115.1V259.1M703.5 116.4V241.1M704.5 132.3V242.4M705.5 147.8V246.7M706.5 154.4V257.4M707.5 147.0V221.5M708.5 147.5V248.9M709.5 163.6V236.9M710.5 138.9V231.7M711.5 148.0V228.7M712.5 158.0V224.9M713.5 150.6V236.5M714.5 162.3V219.6M715.5 144.8V230.5M716.5 157.3V231.6M717.5 153.6V216.6M718.5 161.1V209.0M719.5 147.1V221.0M720.5 159.1V223.3M721.5 149.1V231.1M722.5 162.2V221.2M723.5 163.9V219.8M724.5 154.1V212.9M725.5 174.5V220.1M726.5 168.1V216.7M727.5 154.0V213.6M728.5 158.8V219.5M729.5 155.0V228.6M730.5 164.1V220.9M731.5 158.3V213.7M732.5 166.6V222.3M733.5 169.9V213.3M734.5 171.4V210.9M735.5 165.7V223.4M736.5 165.7V216.4M737.5 166.1V228.5M738.5 178.0V222.1M739.5 172.7V214.9M740.5 165.6V221.4M741.5 160.4V230.1M742.5 165.8V218.6M743.5 167.5V213.5M744.5 173.9V215.7M745.5 145.7V214.8M746.5 168.6V212.8M747.5 149.1V212.3M748.5 150.2V222.9M749.5 160.5V228.4M750.5 165.8V217.5M751.5 161.5V225.7M752.5 168.9V226.7M753.5 160.6V233.8M754.5 162.3V218.7M755.5 158.7V217.6M756.5 155.4V222.9M757.5 148.5V220.7M758.5 164.6V222.1M759.5 154.6V230.4M760.5 166.8V217.5M761.5 166.9V221.8M762.5 165.7V214.6M763.5 167.5V220.5M764.5 153.8V216.4M765.5 153.8V216.9M766.5 150.3V222.3M767.5 161.5V218.3M768.5 155.6V225.7M769.5 162.3V228.7M770.5 165.5V216.5M771.5 148.5V233.0M772.5 156.5V209.9M773.5 163.9V225.5M774.5 154.0V246.9M775.5 159.7V222.4M776.5 154.5V228.9M777.5 159.3V220.1M778.5 115.1V234.7M779.5 115.2V218.9M780.5 137.7V244.9M781.5 115.5V227.5M782.5 140.2V232.1M783.5 144.0V259.1M784.5 148.9V244.4M785.5 115.1V255.8M786.5 158.4V239.1M787.5 126.8V232.8M788.5 129.3V250.9M789.5 144.3V259.1M790.5 115.1V224.9M791.5 153.5V236.3M792.5 115.1V252.0M793.5 161.1V248.4M794.5 128.8V249.6M795.5 144.1V259.1M796.5 151.2V259.1M797.5 144.1V230.1M798.5 144.1V259.1M799.5 115.1V236.4M800.5 158.2V243.7M801.5 146.3V221.1M802.5 137.1V237.2M803.5 129.6V253.4M804.5 161.0V226.6M805.5 159.3V232.4M806.5 139.3V229.0M807.5 128.1V259.1M808.5 147.3V234.8M809.5 155.4V221.2M810.5 127.2V246.8M811.5 163.8V250.6M812.5 143.6V244.1M813.5 161.6V234.5M814.5 150.1V231.9M815.5 159.4V233.2M816.5 146.2V249.8M817.5 119.1V253.7M818.5 115.1V240.4M819.5 142.2V253.8M820.5 153.6V245.8M821.5 142.4V256.1M822.5 149.2V255.3M823.5 124.5V244.5M824.5 123.9V248.2M825.5 136.6V238.6M826.5 163.1V228.7M827.5 141.3V221.7M828.5 153.9V216.8M829.5 127.7V241.6M830.5 139.6V234.9M831.5 157.9V221.1M832.5 160.8V239.1M833.5 167.7V246.1M834.5 148.6V224.2M835.5 158.4V233.8M836.5 162.3V227.5M837.5 158.6V225.0M838.5 170.4V239.6M839.5 170.0V230.3M840.5 154.7V219.6M841.5 158.1V226.4M842.5 160.8V230.9M843.5 166.8V220.5M844.5 158.0V218.5M845.5 148.0V237.0M846.5 169.1V218.6M847.5 162.3V212.7M848.5 165.2V221.5M849.5 160.2V241.4M850.5 162.5V225.2M851.5 163.6V228.0M852.5 167.7V208.7M853.5 162.8V217.0M854.5 166.3V230.3M855.5 163.6V217.9M856.5 163.1V231.4M857.5 158.2V224.2M858.5 166.2V223.6M859.5 164.7V235.0M860.5 154.9V217.4M861.5 164.1V217.6M862.5 164.3V221.5M863.5 156.6V222.3M864.5 160.9V211.0M865.5 162.1V230.7M866.5 161.3V222.4M867.5 169.6V219.6M868.5 159.6V225.4M869.5 152.8V218.1M870.5 158.7V230.5M871.5 171.0V221.2M872.5 160.8V226.3M873.5 167.9V215.2M874.5 164.1V218.9M875.5 161.8V223.5M876.5 169.3V214.8M877.5 152.6V216.5M878.5 163.1V220.4M879.5 157.1V229.6M880.5 158.2V226.6M881.5 152.5V227.8M882.5 153.8V222.9M883.5 170.6V227.7M884.5 162.3V233.6" fill="none" stroke="#ffff00" stroke-width="1.0" opacity="0.9"/><path d="M36.5 153.6V204.9M37.5 177.6V209.7M38.5 165.1V203.9M39.5 170.2V207.7M40.5 169.7V204.8M41.5 168.5V206.6M42.5 175.9V208.2M43.5 168.6V209.1M44.5 171.6V209.4M45.5 141.0V201.9M46.5 166.1V219.1M47.5 169.2V209.1M48.5 168.8V205.9M49.5 170.6V207.7M50.5 172.3V211.8M51.5 169.3V206.3M52.5 164.6V208.5M53.5 168.5V208.4M54.5 161.6V213.3M55.5 168.3V207.6M56.5 166.8V212.6M57.5 156.9V212.1M58.5 163.4V210.0M59.5 168.9V218.2M60.5 167.7V212.4M61.5 163.0V206.4M62.5 153.7V212.7M63.5 166.4V212.1M64.5 167.4V211.2M65.5 160.1V212.8M66.5 169.7V232.2M67.5 166.9V212.9M68.5 158.5V215.0M69.5 157.9V217.6M70.5 162.4V220.5M71.5 158.6V219.9M72.5 164.9V209.6M73.5 157.4V214.1M74.5 159.9V217.0M75.5 170.0V218.5M76.5 154.8V208.4M77.5 155.1V209.8M78.5 166.5V224.8M79.5 168.5V222.0M80.5 160.2V207.5M81.5 163.1V218.5M82.5 149.1V217.0M83.5 158.5V219.6M84.5 160.2V213.9M85.5 157.2V215.7M86.5 166.0V212.2M87.5 168.7V217.6M88.5 161.0V222.3M89.5 155.2V207.3M90.5 164.1V221.5M91.5 165.7V218.9M92.5 155.3V235.8M93.5 175.3V217.6M94.5 148.2V210.0M95.5 152.1V220.7M96.5 163.5V217.4M97.5 157.2V239.4M98.5 169.3V217.1M99.5 156.1V212.3M100.5 169.9V211.8M101.5 158.0V211.8M102.5 160.4V215.1M103.5 152.9V209.2M104.5 166.9V215.7M105.5 162.4V216.3M106.5 162.3V220.8M107.5 165.9V215.7M108.5 154.0V222.5M109.5 165.7V207.7M110.5 163.2V211.9M111.5 167.7V214.2M112.5 155.1V214.8M113.5 163.7V206.1M114.5 161.8V211.5M115.5 172.7V219.2M116.5 153.4V222.6M117.5 159.7V218.9M118.5 160.0V206.0M119.5 156.5V212.3M120.5 164.5V215.2M121.5 167.2V213.1M122.5 170.6V204.8M123.5 170.8V209.2M124.5 158.1V204.2M125.5 171.3V206.0M126.5 170.0V224.3M127.5 168.4V213.8M128.5 165.9V205.0M129.5 163.8V204.6M130.5 172.9V212.6M131.5 174.6V208.0M132.5 167.3V213.2M133.5 159.9V207.5M134.5 163.0V209.3M135.5 166.2V211.3M136.5 169.0V206.1M137.5 165.8V203.2M138.5 168.7V205.5M139.5 162.6V207.3M140.5 171.2V209.3M141.5 166.7V209.9M142.5 168.0V209.9M143.5 164.3V212.7M144.5 166.2V206.5M145.5 149.1V217.7M146.5 157.9V221.8M147.5 158.0V211.9M148.5 176.0V211.1M149.5 169.1V216.8M150.5 170.4V213.4M151.5 164.4V211.1M152.5 176.8V209.4M153.5 160.3V207.1M154.5 161.0V205.5M155.5 173.4V213.5M156.5 172.0V216.4M157.5 171.3V205.9M158.5 167.2V209.9M159.5 163.8V211.2M160.5 153.6V208.3M161.5 168.4V207.0M162.5 163.0V208.5M163.5 166.6V203.0M164.5 155.9V209.9M165.5 163.1V208.9M166.5 158.9V222.6M167.5 172.4V215.0M168.5 168.4V208.7M169.5 171.3V210.2M170.5 157.7V219.9M171.5 163.4V219.1M172.5 168.2V211.3M173.5 169.6V209.7M174.5 164.6V204.8M175.5 170.7V209.0M176.5 170.3V209.6M177.5 164.1V207.4M178.5 149.1V221.2M179.5 168.3V204.0M180.5 167.8V210.1M181.5 172.3V213.4M182.5 171.5V214.4M183.5 162.4V224.6M184.5 155.8V206.1M185.5 166.0V210.6M186.5 163.8V213.5M187.5 164.5V212.1M188.5 163.7V209.6M189.5 171.0V210.1M190.5 168.3V220.4M191.5 156.4V211.6M192.5 164.0V211.0M193.5 161.7V220.3M194.5 158.6V233.6M195.5 157.1V217.0M196.5 155.3V210.0M197.5 153.7V209.6M198.5 162.4V210.8M199.5 148.3V208.0M200.5 160.9V215.2M201.5 152.9V219.6M202.5 174.2V219.9M203.5 149.3V211.5M204.5 160.4V221.2M205.5 164.1V222.5M206.5 157.2V222.2M207.5 148.9V219.1M208.5 154.8V216.7M209.5 155.2V206.9M210.5 152.6V209.8M211.5 166.6V217.3M212.5 163.9V217.9M213.5 159.2V215.1M214.5 161.9V231.2M215.5 140.1V207.9M216.5 157.1V208.1M217.5 148.1V223.9M218.5 164.4V221.3M219.5 166.6V212.3M220.5 156.8V206.2M221.5 159.1V222.9M222.5 167.1V219.5M223.5 160.7V227.0M224.5 163.9V212.0M225.5 150.3V227.0M226.5 158.3V211.0M227.5 150.9V215.2M228.5 160.5V215.1M229.5 164.5V219.1M230.5 169.1V209.9M231.5 148.6V214.1M232.5 162.9V223.1M233.5 154.1V212.9M234.5 164.6V215.6M235.5 160.0V213.9M236.5 154.3V218.6M237.5 162.9V209.7M238.5 163.9V213.7M239.5 168.1V224.8M240.5 173.3V214.2M241.5 161.8V210.1M242.5 174.0V207.1M243.5 162.8V211.0M244.5 166.5V205.6M245.5 159.1V205.7M246.5 167.3V207.5M247.5 171.0V205.8M248.5 164.8V214.5M249.5 170.0V204.6M250.5 168.2V218.8M251.5 167.1V207.1M252.5 168.0V210.8M253.5 168.3V213.3M254.5 171.3V211.1M255.5 168.3V213.5M256.5 176.3V206.0M257.5 168.2V202.0M258.5 172.9V209.1M259.5 160.6V203.7M260.5 159.6V207.5M261.5 175.7V214.7M262.5 166.6V209.1M263.5 168.1V207.4M264.5 172.3V205.4M265.5 164.4V208.6M266.5 169.7V209.1M267.5 175.1V204.0M268.5 168.8V211.3M269.5 168.2V205.6M270.5 166.8V210.9M271.5 173.1V208.0M272.5 163.9V214.9M273.5 163.2V214.1M274.5 172.7V209.9M275.5 170.6V209.4M276.5 167.8V212.0M277.5 170.2V217.2M278.5 156.1V215.3M279.5 166.3V210.7M280.5 172.2V211.4M281.5 171.2V218.6M282.5 167.7V203.9M283.5 151.3V212.6M284.5 168.3V206.4M285.5 166.7V217.2M286.5 164.4V207.9M287.5 167.4V209.6M288.5 151.2V205.8M289.5 169.9V210.3M290.5 162.8V214.3M291.5 165.9V219.5M292.5 163.2V205.7M293.5 171.5V209.5M294.5 155.1V240.0M295.5 165.5V215.3M296.5 166.0V210.6M297.5 170.7V213.7M298.5 169.3V202.4M299.5 163.4V220.7M300.5 160.3V213.0M301.5 159.2V206.1M302.5 155.8V224.8M303.5 158.7V210.4M304.5 162.9V211.0M305.5 160.6V215.9M306.5 158.7V213.6M307.5 165.8V209.7M308.5 158.3V214.2M309.5 153.0V207.0M310.5 163.8V206.6M311.5 158.9V217.3M312.5 159.2V223.2M313.5 148.6V221.9M314.5 162.9V214.2M315.5 165.1V225.6M316.5 165.1V213.2M317.5 155.2V214.5M318.5 172.6V228.1M319.5 157.5V211.1M320.5 140.7V216.7M321.5 167.9V215.4M322.5 149.6V208.3M323.5 154.8V226.4M324.5 162.3V213.1M325.5 163.2V212.7M326.5 158.4V215.0M327.5 167.7V215.0M328.5 145.2V213.6M329.5 157.4V208.4M330.5 150.1V220.0M331.5 158.0V217.3M332.5 158.0V216.2M333.5 157.2V239.6M334.5 172.6V218.0M335.5 167.1V214.3M336.5 162.5V222.1M337.5 159.3V218.8M338.5 153.0V224.3M339.5 149.7V217.0M340.5 164.6V223.8M341.5 167.0V221.5M342.5 163.3V218.0M343.5 157.3V217.8M344.5 163.4V220.6M345.5 159.2V215.8M346.5 152.9V207.4M347.5 160.2V204.3M348.5 166.0V212.2M349.5 171.7V210.2M350.5 163.6V212.5M351.5 158.1V216.4M352.5 164.5V214.6M353.5 163.0V218.8M354.5 168.6V211.0M355.5 162.7V214.2M356.5 166.8V217.4M357.5 167.9V213.8M358.5 172.0V211.4M359.5 170.6V212.0M360.5 169.2V208.3M361.5 171.7V207.9M362.5 171.1V212.9M363.5 163.4V215.0M364.5 166.8V208.9M365.5 145.3V215.0M366.5 161.8V221.9M367.5 170.5V223.4M368.5 162.7V210.7M369.5 165.3V216.0M370.5 170.7V213.5M371.5 160.8V214.5M372.5 171.1V214.7M373.5 178.9V213.1M374.5 162.8V214.7M375.5 170.4V211.4M376.5 158.0V209.3M377.5 170.6V211.7M378.5 172.9V212.9M379.5 157.6V217.1M380.5 172.4V212.3M381.5 166.3V214.3M382.5 158.3V218.3M383.5 166.8V206.6M384.5 167.8V209.3M385.5 166.9V213.2M386.5 162.5V210.6M387.5 171.3V206.3M388.5 163.9V215.7M389.5 164.1V210.2M390.5 151.1V206.4M391.5 169.1V221.5M392.5 171.8V205.4M393.5 163.2V210.4M394.5 169.4V207.6M395.5 165.8V211.0M396.5 166.7V213.3M397.5 160.3V207.1M398.5 170.6V210.0M399.5 167.9V209.9M400.5 177.6V206.3M401.5 171.7V216.7M402.5 157.6V211.3M403.5 170.6V209.3M404.5 170.7V207.7M405.5 173.0V209.2M406.5 163.9V211.4M407.5 166.0V209.2M408.5 172.8V217.4M409.5 163.4V202.0M410.5 165.6V203.2M411.5 160.4V210.1M412.5 169.8V203.7M413.5 154.2V210.8M414.5 164.6V208.1M415.5 167.3V215.3M416.5 168.6V213.0M417.5 165.3V218.4M418.5 160.5V216.4M419.5 158.8V225.3M420.5 157.9V216.3M421.5 162.6V221.5M422.5 157.3V215.2M423.5 159.2V215.9M424.5 160.8V208.5M425.5 166.2V208.6M426.5 162.0V217.4M427.5 159.0V203.5M428.5 161.9V213.9M429.5 159.6V214.1M430.5 167.3V217.0M431.5 160.3V216.5M432.5 157.8V213.3M433.5 154.9V214.6M434.5 159.7V210.3M435.5 167.3V216.2M436.5 170.5V217.3M437.5 155.6V225.4M438.5 152.9V220.4M439.5 159.1V216.7M440.5 132.4V226.9M441.5 151.2V208.7M442.5 153.5V220.7M443.5 151.5V231.2M444.5 154.7V213.4M445.5 140.0V210.2M446.5 159.0V218.4M447.5 155.0V227.3M448.5 158.5V224.9M449.5 147.6V222.9M450.5 159.8V220.4M451.5 134.3V221.2M452.5 158.9V216.4M453.5 159.3V215.8M454.5 158.7V242.5M455.5 161.9V218.6M456.5 161.9V210.2M457.5 149.2V222.7M458.5 155.9V218.5M459.5 154.8V225.5M460.5 159.8V218.1M461.5 143.5V217.1M462.5 151.7V219.3M463.5 157.5V213.8M464.5 161.8V224.8M465.5 164.3V211.7M466.5 156.7V223.5M467.5 169.9V219.6M468.5 155.8V220.8M469.5 162.7V208.2M470.5 169.9V224.7M471.5 168.6V220.9M472.5 165.1V214.6M473.5 163.3V217.1M474.5 168.6V215.3M475.5 160.0V211.0M476.5 171.7V223.7M477.5 163.8V212.3M478.5 173.6V205.3M479.5 172.3V208.8M480.5 162.5V205.2M481.5 169.2V214.6M482.5 170.9V215.0M483.5 169.6V221.2M484.5 164.7V223.6M485.5 167.5V207.6M486.5 167.3V213.0M487.5 161.0V216.1M488.5 170.8V214.9M489.5 169.7V208.6M490.5 170.0V214.9M491.5 160.3V213.2M492.5 161.5V218.2M493.5 159.4V210.6M494.5 167.6V209.6M495.5 168.2V208.5M496.5 162.4V209.0M497.5 169.4V207.4M498.5 162.6V209.2M499.5 163.2V213.2M500.5 170.8V212.9M501.5 167.8V217.9M502.5 168.0V216.5M503.5 156.1V213.8M504.5 148.7V205.9M505.5 167.9V213.5M506.5 167.3V216.8M507.5 176.8V205.4M508.5 166.3V206.0M509.5 167.4V206.6M510.5 172.4V206.3M511.5 162.9V209.3M512.5 174.4V206.7M513.5 168.5V212.4M514.5 166.7V205.6M515.5 173.1V210.0M516.5 162.4V208.4M517.5 161.1V206.5M518.5 173.7V216.0M519.5 173.7V210.7M520.5 163.9V213.2M521.5 167.5V209.1M522.5 172.9V214.2M523.5 168.7V213.7M524.5 167.8V210.2M525.5 168.0V203.8M526.5 162.4V214.9M527.5 164.9V214.4M528.5 155.6V211.6M529.5 157.7V212.1M530.5 162.9V212.6M531.5 159.5V214.1M532.5 158.4V208.1M533.5 162.7V211.8M534.5 172.3V213.5M535.5 159.4V208.6M536.5 163.4V207.6M537.5 154.5V223.6M538.5 160.3V216.8M539.5 161.1V212.2M540.5 158.8V211.3M541.5 154.2V203.0M542.5 161.3V214.4M543.5 164.4V212.4M544.5 161.3V230.0M545.5 167.0V205.3M546.5 163.0V209.5M547.5 164.4V224.5M548.5 160.6V220.7M549.5 139.4V217.0M550.5 162.0V231.1M551.5 163.3V212.2M552.5 164.7V214.9M553.5 159.7V225.2M554.5 169.8V225.8M555.5 156.7V214.1M556.5 164.9V224.5M557.5 161.6V213.2M558.5 164.3V212.2M559.5 166.4V236.4M560.5 168.7V216.6M561.5 161.5V226.2M562.5 153.9V208.7M563.5 152.5V220.8M564.5 161.7V214.7M565.5 154.9V213.7M566.5 167.2V221.6M567.5 159.2V230.9M568.5 164.5V229.6M569.5 163.4V222.9M570.5 156.5V219.5M571.5 170.3V224.4M572.5 157.4V221.4M573.5 133.4V225.9M574.5 162.8V214.2M575.5 143.0V228.3M576.5 154.2V230.0M577.5 155.9V217.9M578.5 164.7V215.3M579.5 146.8V214.5M580.5 167.7V216.0M581.5 148.8V220.8M582.5 160.9V217.3M583.5 166.4V209.8M584.5 164.9V213.0M585.5 158.5V218.4M586.5 154.4V207.9M587.5 167.8V221.6M588.5 167.9V213.6M589.5 169.3V213.8M590.5 156.4V202.5M591.5 162.4V205.7M592.5 166.2V207.5M593.5 159.1V208.9M594.5 169.3V206.4M595.5 166.9V213.8M596.5 155.5V211.4M597.5 159.6V209.8M598.5 176.4V203.5M599.5 179.6V218.7M600.5 170.9V210.0M601.5 160.6V213.3M602.5 169.2V207.7M603.5 168.4V210.3M604.5 163.7V213.9M605.5 171.5V211.5M606.5 166.2V215.3M607.5 162.7V209.6M608.5 164.6V221.8M609.5 165.1V203.2M610.5 170.3V207.9M611.5 164.5V215.3M612.5 169.6V209.1M613.5 159.4V208.3M614.5 148.9V203.6M615.5 171.0V216.5M616.5 176.5V203.2M617.5 169.6V212.7M618.5 165.3V211.1M619.5 161.1V214.6M620.5 160.9V218.1M621.5 171.2V207.2M622.5 171.2V206.8M623.5 159.6V208.8M624.5 172.5V203.7M625.5 160.9V214.3M626.5 168.6V208.4M627.5 163.0V210.9M628.5 163.4V205.6M629.5 162.9V210.2M630.5 162.6V207.5M631.5 172.1V209.8M632.5 165.8V205.7M633.5 167.3V215.4M634.5 165.7V207.4M635.5 159.8V201.4M636.5 168.7V213.3M637.5 170.9V208.8M638.5 170.9V206.5M639.5 168.9V225.5M640.5 163.0V209.9M641.5 171.3V204.9M642.5 160.2V207.5M643.5 165.4V211.9M644.5 168.4V209.2M645.5 173.3V216.7M646.5 166.0V215.7M647.5 163.2V207.3M648.5 174.5V210.4M649.5 159.9V214.7M650.5 155.8V208.6M651.5 164.4V209.4M652.5 163.9V215.0M653.5 149.3V212.7M654.5 158.7V205.5M655.5 171.2V208.4M656.5 163.4V211.3M657.5 160.0V210.7M658.5 164.8V209.4M659.5 175.0V221.8M660.5 159.8V212.0M661.5 168.4V208.0M662.5 154.3V212.8M663.5 164.2V205.3M664.5 159.9V217.0M665.5 166.1V215.8M666.5 159.5V207.1M667.5 162.0V209.8M668.5 153.9V225.2M669.5 156.5V216.3M670.5 155.1V215.5M671.5 160.8V219.0M672.5 167.1V210.7M673.5 150.1V217.6M674.5 162.1V219.9M675.5 157.5V232.4M676.5 160.7V233.6M677.5 160.0V215.4M678.5 162.5V224.6M679.5 169.3V215.9M680.5 150.0V207.8M681.5 163.8V210.7M682.5 159.8V229.9M683.5 162.5V208.9M684.5 162.5V211.1M685.5 169.0V219.4M686.5 169.5V223.8M687.5 164.2V212.5M688.5 168.4V221.4M689.5 163.1V212.9M690.5 157.0V222.9M691.5 166.2V219.3M692.5 166.6V213.5M693.5 146.0V221.3M694.5 157.6V219.5M695.5 146.5V209.5M696.5 161.7V229.2M697.5 163.5V237.4M698.5 169.1V228.6M699.5 166.8V215.7M700.5 166.6V216.1M701.5 166.8V208.1M702.5 148.5V212.7M703.5 153.7V219.3M704.5 159.0V223.0M705.5 165.5V212.6M706.5 159.1V216.7M707.5 168.9V217.1M708.5 158.0V212.0M709.5 162.8V213.0M710.5 159.1V218.3M711.5 146.3V218.6M712.5 160.2V218.4M713.5 149.1V228.4M714.5 156.8V207.3M715.5 164.0V215.6M716.5 157.0V211.5M717.5 155.2V205.6M718.5 169.1V208.7M719.5 165.5V206.6M720.5 171.4V214.0M721.5 168.0V212.5M722.5 161.8V218.0M723.5 165.9V209.2M724.5 169.9V204.9M725.5 173.3V212.4M726.5 165.3V212.2M727.5 162.5V213.7M728.5 163.9V216.8M729.5 165.9V207.7M730.5 173.1V214.2M731.5 155.8V206.1M732.5 167.7V210.9M733.5 168.2V213.6M734.5 163.2V209.7M735.5 176.4V211.2M736.5 167.7V204.7M737.5 168.1V207.4M738.5 165.4V210.9M739.5 159.1V205.4M740.5 164.8V206.6M741.5 175.3V225.0M742.5 169.1V211.4M743.5 166.3V206.7M744.5 166.6V206.0M745.5 173.3V217.5M746.5 174.7V200.7M747.5 164.3V208.5M748.5 165.5V212.9M749.5 167.5V207.5M750.5 174.9V212.3M751.5 155.8V205.6M752.5 178.6V209.7M753.5 169.3V209.9M754.5 153.2V209.8M755.5 168.2V210.4M756.5 166.1V209.9M757.5 172.8V215.4M758.5 158.9V208.6M759.5 173.3V207.3M760.5 166.0V208.5M761.5 166.5V208.4M762.5 172.2V204.7M763.5 161.9V202.9M764.5 173.3V204.9M765.5 170.2V211.4M766.5 167.3V207.2M767.5 169.0V208.1M768.5 164.1V228.1M769.5 161.2V215.8M770.5 167.5V209.6M771.5 169.6V207.7M772.5 169.3V218.3M773.5 168.5V209.0M774.5 161.1V217.5M775.5 167.3V213.6M776.5 161.8V219.8M777.5 166.8V209.6M778.5 168.6V216.8M779.5 158.3V207.1M780.5 171.1V217.9M781.5 159.6V219.2M782.5 149.6V215.2M783.5 163.5V204.5M784.5 163.2V215.3M785.5 166.8V220.4M786.5 166.3V211.5M787.5 171.0V214.5M788.5 164.8V235.3M789.5 165.2V219.6M790.5 159.0V221.4M791.5 153.5V215.5M792.5 162.2V220.7M793.5 150.6V219.6M794.5 165.1V207.8M795.5 139.2V215.1M796.5 169.6V227.2M797.5 173.3V211.2M798.5 164.2V214.9M799.5 152.6V208.6M800.5 159.3V216.9M801.5 164.4V212.8M802.5 154.0V216.8M803.5 163.0V232.2M804.5 162.9V214.5M805.5 166.8V221.1M806.5 170.5V209.1M807.5 166.8V217.3M808.5 147.8V216.0M809.5 162.4V214.5M810.5 170.5V213.0M811.5 168.1V212.2M812.5 165.5V227.2M813.5 171.6V217.7M814.5 158.7V207.8M815.5 158.1V212.8M816.5 162.8V223.8M817.5 156.5V211.5M818.5 167.2V221.6M819.5 172.8V212.4M820.5 156.1V212.5M821.5 157.4V228.4M822.5 166.1V213.6M823.5 164.0V217.8M824.5 163.7V218.3M825.5 158.3V220.3M826.5 164.3V231.2M827.5 167.5V209.0M828.5 162.6V216.9M829.5 165.1V214.6M830.5 166.2V209.4M831.5 172.9V210.4M832.5 178.3V208.1M833.5 170.3V215.0M834.5 174.1V214.7M835.5 164.4V208.6M836.5 161.5V215.5M837.5 164.5V208.3M838.5 169.0V205.9M839.5 166.8V201.4M840.5 159.9V215.8M841.5 170.7V214.0M842.5 161.8V208.7M843.5 163.2V208.1M844.5 165.6V204.8M845.5 158.2V212.4M846.5 170.8V209.4M847.5 161.8V212.3M848.5 171.7V210.5M849.5 171.1V204.4M850.5 172.4V203.9M851.5 164.9V211.7M852.5 171.9V203.5M853.5 167.1V211.0M854.5 172.7V214.3M855.5 161.0V204.8M856.5 155.3V213.0M857.5 166.2V210.0M858.5 156.8V212.4M859.5 164.2V207.2M860.5 152.5V209.8M861.5 166.9V211.9M862.5 174.4V220.1M863.5 158.0V213.5M864.5 168.1V212.3M865.5 172.3V204.9M866.5 170.6V211.5M867.5 174.6V207.1M868.5 168.3V209.6M869.5 172.4V211.2M870.5 158.1V214.9M871.5 163.6V212.9M872.5 174.7V210.9M873.5 174.2V209.8M874.5 170.2V217.3M875.5 175.6V206.4M876.5 168.0V210.2M877.5 167.6V217.4M878.5 171.2V209.2M879.5 170.1V214.2M880.5 164.6V214.6M881.5 158.5V221.5M882.5 158.0V215.9M883.5 167.2V203.8M884.5 162.4V210.1" fill="none" stroke="#00e000" stroke-width="1.0" opacity="1.0"/><path d="M36.5 174.1V217.9M37.5 176.7V208.1M38.5 170.7V240.0M39.5 165.7V204.1M40.5 158.8V204.3M41.5 168.1V221.3M42.5 172.6V213.6M43.5 174.0V210.4M44.5 162.7V213.7M45.5 153.0V217.9M46.5 166.9V209.2M47.5 176.3V207.9M48.5 174.9V205.6M49.5 153.4V206.6M50.5 167.3V207.0M51.5 178.4V222.5M52.5 169.3V214.3M53.5 175.7V216.6M54.5 172.8V208.5M55.5 172.1V221.9M56.5 173.3V203.4M57.5 164.1V216.8M58.5 169.1V218.3M59.5 172.6V208.6M60.5 164.7V206.6M61.5 161.4V216.7M62.5 177.8V207.9M63.5 170.1V208.2M64.5 174.3V214.1M65.5 168.1V205.7M66.5 175.4V212.1M67.5 167.2V235.6M68.5 167.7V213.5M69.5 169.2V221.7M70.5 173.7V206.6M71.5 167.4V215.7M72.5 172.1V220.3M73.5 171.0V212.7M74.5 163.1V221.9M75.5 167.9V243.6M76.5 154.6V221.5M77.5 154.8V228.7M78.5 173.2V217.7M79.5 163.6V222.7M80.5 173.9V212.3M81.5 155.4V210.1M82.5 164.3V214.1M83.5 177.7V210.8M84.5 163.9V217.2M85.5 166.5V208.3M86.5 156.0V216.2M87.5 173.5V218.6M88.5 145.1V234.9M89.5 169.6V235.7M90.5 167.8V219.9M91.5 172.1V211.3M92.5 151.2V229.1M93.5 157.8V226.9M94.5 135.6V214.6M95.5 159.6V210.6M96.5 157.5V204.1M97.5 156.9V214.2M98.5 163.2V237.0M99.5 166.0V216.4M100.5 150.4V221.8M101.5 169.3V224.0M102.5 164.1V219.4M103.5 165.6V226.9M104.5 160.0V204.2M105.5 169.2V213.5M106.5 167.1V220.7M107.5 159.8V214.4M108.5 161.5V227.4M109.5 167.0V214.5M110.5 158.6V224.4M111.5 173.5V233.4M112.5 173.7V211.7M113.5 175.3V214.2M114.5 158.7V212.7M115.5 170.4V220.0M116.5 173.0V202.4M117.5 174.3V204.5M118.5 163.2V210.8M119.5 174.7V221.5M120.5 176.0V218.3M121.5 163.1V207.7M122.5 175.7V229.2M123.5 170.8V213.7M124.5 168.5V208.3M125.5 171.7V217.0M126.5 169.0V224.7M127.5 156.0V212.1M128.5 172.1V203.5M129.5 176.4V208.7M130.5 178.9V213.0M131.5 170.3V220.5M132.5 171.3V205.9M133.5 166.9V214.3M134.5 172.1V205.0M135.5 172.2V212.8M136.5 173.6V204.3M137.5 172.4V209.0M138.5 167.7V203.4M139.5 171.5V206.0M140.5 168.2V203.1M141.5 149.5V201.6M142.5 165.2V223.5M143.5 177.8V223.0M144.5 151.7V216.1M145.5 166.3V209.7M146.5 174.8V226.4M147.5 161.2V210.2M148.5 168.8V215.7M149.5 173.0V222.6M150.5 173.1V214.0M151.5 175.1V226.6M152.5 168.6V211.2M153.5 159.6V211.2M154.5 171.2V213.3M155.5 165.7V205.2M156.5 149.8V205.6M157.5 176.2V218.9M158.5 167.0V202.6M159.5 171.1V222.6M160.5 175.4V214.5M161.5 175.3V223.2M162.5 169.1V218.9M163.5 165.5V217.3M164.5 172.5V230.2M165.5 168.5V211.8M166.5 163.0V211.6M167.5 166.6V222.7M168.5 161.6V208.0M169.5 165.2V222.8M170.5 165.0V218.3M171.5 150.3V209.0M172.5 163.8V204.7M173.5 167.9V201.5M174.5 163.0V232.3M175.5 174.6V203.8M176.5 171.1V205.2M177.5 162.1V220.2M178.5 163.3V216.5M179.5 153.5V214.3M180.5 167.9V213.6M181.5 176.3V210.0M182.5 147.9V206.9M183.5 158.4V208.0M184.5 174.6V218.7M185.5 153.1V223.4M186.5 167.3V224.5M187.5 177.4V213.7M188.5 170.1V201.3M189.5 170.8V219.5M190.5 150.4V216.5M191.5 167.5V204.3M192.5 168.5V232.0M193.5 163.5V215.9M194.5 167.7V214.6M195.5 169.8V219.4M196.5 163.6V216.2M197.5 153.7V217.5M198.5 161.0V223.2M199.5 172.4V214.7M200.5 173.8V223.9M201.5 164.4V218.3M202.5 170.9V246.5M203.5 168.2V220.3M204.5 172.8V214.8M205.5 143.0V213.7M206.5 155.8V218.6M207.5 171.2V217.5M208.5 156.9V220.5M209.5 148.3V215.3M210.5 177.3V214.4M211.5 163.0V222.4M212.5 169.0V228.9M213.5 159.9V220.8M214.5 167.5V213.8M215.5 166.6V212.0M216.5 163.2V210.0M217.5 145.1V219.8M218.5 138.5V214.8M219.5 169.8V215.6M220.5 172.8V208.1M221.5 131.0V215.6M222.5 169.6V205.5M223.5 170.8V207.6M224.5 162.7V215.0M225.5 160.6V220.2M226.5 153.5V212.7M227.5 161.2V209.2M228.5 172.7V219.5M229.5 161.8V214.2M230.5 164.8V223.1M231.5 146.4V217.0M232.5 167.4V215.6M233.5 175.9V214.8M234.5 172.1V219.1M235.5 149.3V208.6M236.5 171.4V205.3M237.5 178.8V221.9M238.5 171.5V209.4M239.5 168.3V213.2M240.5 157.4V218.5M241.5 174.8V222.2M242.5 163.0V199.4M243.5 161.8V205.8M244.5 173.3V223.8M245.5 170.0V202.6M246.5 150.9V216.3M247.5 151.5V209.6M248.5 161.1V206.3M249.5 166.2V211.2M250.5 158.7V202.6M251.5 169.9V215.1M252.5 169.5V222.5M253.5 174.4V203.6M254.5 168.9V207.5M255.5 169.5V222.7M256.5 135.3V214.8M257.5 170.3V209.6M258.5 157.3V225.4M259.5 156.8V202.5M260.5 170.3V209.9M261.5 158.5V212.5M262.5 180.2V209.6M263.5 168.2V218.5M264.5 161.7V202.5M265.5 180.9V212.2M266.5 175.9V206.8M267.5 159.7V222.6M268.5 170.7V221.0M269.5 175.6V207.0M270.5 171.5V205.1M271.5 172.6V211.5M272.5 163.0V206.4M273.5 165.4V208.0M274.5 170.9V215.2M275.5 173.3V208.7M276.5 169.3V230.1M277.5 156.7V212.3M278.5 166.2V208.3M279.5 163.7V205.0M280.5 170.0V208.3M281.5 176.6V221.6M282.5 173.5V216.2M283.5 163.6V225.2M284.5 168.2V223.9M285.5 174.6V216.3M286.5 178.0V207.3M287.5 168.1V210.8M288.5 171.1V212.4M289.5 171.2V202.6M290.5 171.0V214.5M291.5 166.6V205.5M292.5 166.4V211.3M293.5 160.2V208.6M294.5 160.6V217.1M295.5 156.1V243.7M296.5 161.6V205.4M297.5 170.0V213.3M298.5 168.8V235.2M299.5 163.8V206.4M300.5 169.8V210.9M301.5 163.1V211.8M302.5 155.4V215.8M303.5 173.1V205.4M304.5 176.3V217.5M305.5 155.9V221.1M306.5 166.3V245.9M307.5 159.9V214.2M308.5 172.9V209.4M309.5 147.2V216.0M310.5 156.1V204.2M311.5 166.5V221.8M312.5 169.4V232.0M313.5 162.0V215.2M314.5 167.2V214.8M315.5 167.6V212.5M316.5 171.5V218.7M317.5 153.4V206.7M318.5 166.2V234.5M319.5 163.6V212.3M320.5 165.6V213.0M321.5 177.5V233.3M322.5 159.4V215.2M323.5 164.9V217.1M324.5 167.0V232.6M325.5 166.2V217.1M326.5 173.3V226.1M327.5 158.0V211.3M328.5 171.6V205.8M329.5 172.9V216.0M330.5 172.7V230.1M331.5 159.3V218.1M332.5 160.0V217.7M333.5 169.8V223.5M334.5 169.8V217.6M335.5 151.1V215.8M336.5 173.7V221.5M337.5 153.8V219.3M338.5 164.8V215.3M339.5 167.8V229.4M340.5 171.1V222.2M341.5 162.2V219.6M342.5 155.8V222.6M343.5 168.0V202.0M344.5 157.0V216.7M345.5 141.9V214.4M346.5 167.8V203.5M347.5 172.4V238.1M348.5 168.9V216.8M349.5 174.8V211.8M350.5 170.5V211.2M351.5 171.8V217.2M352.5 175.2V214.2M353.5 163.7V204.9M354.5 180.6V210.7M355.5 176.2V217.4M356.5 146.4V218.0M357.5 158.1V221.2M358.5 164.0V206.1M359.5 163.9V208.7M360.5 150.6V215.9M361.5 164.3V208.6M362.5 168.1V214.6M363.5 176.1V206.9M364.5 169.1V217.3M365.5 173.6V213.0M366.5 173.4V217.1M367.5 173.5V212.6M368.5 169.2V207.2M369.5 171.2V204.9M370.5 161.5V212.7M371.5 176.7V208.2M372.5 170.1V203.6M373.5 150.0V208.6M374.5 168.7V219.2M375.5 158.2V223.9M376.5 158.8V218.9M377.5 156.8V225.4M378.5 162.8V209.8M379.5 177.0V211.3M380.5 170.8V206.3M381.5 171.6V207.3M382.5 177.7V228.6M383.5 172.1V216.0M384.5 176.4V217.9M385.5 178.2V244.2M386.5 167.4V233.1M387.5 169.3V206.8M388.5 173.4V221.3M389.5 174.9V207.5M390.5 172.6V221.4M391.5 171.6V202.0M392.5 171.7V206.4M393.5 169.3V206.6M394.5 171.9V234.3M395.5 165.9V202.5M396.5 164.8V222.8M397.5 166.2V222.4M398.5 173.3V213.5M399.5 173.0V219.8M400.5 165.5V244.0M401.5 170.3V214.6M402.5 169.2V210.6M403.5 181.2V225.7M404.5 181.8V219.4M405.5 166.3V205.4M406.5 166.3V214.1M407.5 155.7V214.9M408.5 162.8V205.5M409.5 167.1V206.7M410.5 168.5V208.2M411.5 177.1V205.2M412.5 161.0V217.1M413.5 172.5V215.7M414.5 164.1V201.6M415.5 166.6V210.1M416.5 165.6V215.2M417.5 157.9V204.9M418.5 171.6V212.0M419.5 170.7V215.6M420.5 173.6V206.0M421.5 170.3V215.6M422.5 148.8V203.4M423.5 169.8V220.5M424.5 156.0V209.1M425.5 158.1V204.7M426.5 157.2V203.4M427.5 158.1V204.2M428.5 172.9V230.5M429.5 161.4V209.6M430.5 147.9V210.7M431.5 171.5V212.4M432.5 166.1V205.7M433.5 167.8V225.0M434.5 163.6V209.0M435.5 173.4V223.4M436.5 141.7V213.4M437.5 165.9V216.0M438.5 174.3V217.4M439.5 145.6V223.4M440.5 156.8V205.9M441.5 162.0V221.6M442.5 157.7V215.1M443.5 167.6V214.8M444.5 166.6V212.6M445.5 159.8V228.6M446.5 157.6V218.8M447.5 155.7V228.9M448.5 159.6V223.1M449.5 161.7V202.4M450.5 162.0V214.1M451.5 152.8V226.4M452.5 149.7V208.5M453.5 163.7V203.7M454.5 170.0V201.9M455.5 153.7V237.5M456.5 159.8V208.9M457.5 152.8V220.3M458.5 175.2V212.1M459.5 167.7V225.5M460.5 168.0V233.9M461.5 158.1V204.9M462.5 172.3V216.0M463.5 150.9V209.2M464.5 163.0V203.1M465.5 161.0V209.1M466.5 174.4V214.2M467.5 166.6V225.9M468.5 154.3V226.6M469.5 176.2V217.3M470.5 164.0V205.0M471.5 161.3V218.8M472.5 171.9V212.5M473.5 159.4V212.5M474.5 169.9V207.3M475.5 156.6V211.3M476.5 164.2V233.6M477.5 166.4V227.1M478.5 147.2V224.3M479.5 161.6V218.0M480.5 156.6V209.3M481.5 175.6V212.2M482.5 173.0V213.1M483.5 161.8V215.1M484.5 161.1V209.5M485.5 169.2V206.4M486.5 162.3V222.1M487.5 175.3V209.3M488.5 167.3V219.2M489.5 175.9V210.6M490.5 166.3V217.6M491.5 172.2V216.1M492.5 173.1V218.2M493.5 168.5V217.7M494.5 150.6V205.9M495.5 175.2V203.8M496.5 172.9V211.5M497.5 159.6V228.6M498.5 171.8V206.5M499.5 151.3V206.0M500.5 167.3V237.8M501.5 168.3V202.9M502.5 166.2V208.0M503.5 151.6V209.0M504.5 163.6V207.4M505.5 164.8V207.6M506.5 167.0V221.6M507.5 177.8V213.5M508.5 174.5V213.3M509.5 154.9V202.5M510.5 162.0V218.7M511.5 164.9V213.1M512.5 163.8V213.0M513.5 172.6V219.0M514.5 166.3V214.3M515.5 174.6V211.7M516.5 165.9V215.2M517.5 173.6V207.2M518.5 170.4V206.1M519.5 165.3V203.8M520.5 171.2V220.4M521.5 163.6V207.6M522.5 165.3V213.4M523.5 166.0V222.0M524.5 156.5V230.7M525.5 177.3V209.5M526.5 177.6V213.3M527.5 163.8V212.8M528.5 160.4V204.2M529.5 147.6V208.9M530.5 162.2V247.8M531.5 161.6V211.9M532.5 174.0V230.8M533.5 161.2V219.3M534.5 162.8V231.4M535.5 174.8V225.3M536.5 174.1V214.8M537.5 168.1V205.2M538.5 165.2V227.3M539.5 181.9V219.4M540.5 166.3V217.9M541.5 165.5V221.2M542.5 168.8V210.4M543.5 165.0V214.8M544.5 162.5V213.7M545.5 171.9V206.0M546.5 162.3V206.5M547.5 167.6V213.1M548.5 172.6V201.4M549.5 154.9V221.7M550.5 151.2V221.4M551.5 173.4V213.9M552.5 171.1V216.5M553.5 173.7V205.8M554.5 142.9V218.5M555.5 167.9V222.8M556.5 166.8V221.0M557.5 170.8V222.9M558.5 170.1V215.9M559.5 173.9V240.8M560.5 164.8V222.2M561.5 160.5V223.3M562.5 174.7V226.3M563.5 163.6V208.3M564.5 171.6V206.2M565.5 165.4V224.1M566.5 164.7V206.6M567.5 153.9V210.1M568.5 153.1V225.2M569.5 153.5V207.1M570.5 151.9V207.6M571.5 172.2V210.4M572.5 168.9V207.2M573.5 152.1V235.6M574.5 163.6V220.3M575.5 165.6V223.2M576.5 177.6V202.4M577.5 177.1V204.2M578.5 154.4V206.4M579.5 160.5V226.7M580.5 161.7V226.0M581.5 168.7V204.6M582.5 175.3V204.4M583.5 160.4V219.9M584.5 157.3V220.1M585.5 149.4V217.1M586.5 166.5V219.2M587.5 166.8V206.5M588.5 171.2V214.2M589.5 156.1V212.1M590.5 147.4V225.0M591.5 168.3V210.4M592.5 164.7V202.3M593.5 167.4V224.4M594.5 171.6V231.6M595.5 181.0V221.0M596.5 170.9V209.9M597.5 163.1V207.0M598.5 176.9V220.9M599.5 173.6V208.4M600.5 183.0V216.1M601.5 157.0V218.5M602.5 164.3V210.9M603.5 168.5V201.2M604.5 170.6V215.8M605.5 173.0V205.5M606.5 169.4V202.8M607.5 171.1V211.3M608.5 170.7V212.7M609.5 169.2V211.0M610.5 168.0V216.8M611.5 154.0V201.4M612.5 177.3V216.4M613.5 166.9V227.7M614.5 173.0V211.0M615.5 175.8V208.2M616.5 180.8V210.4M617.5 164.0V222.8M618.5 175.1V210.3M619.5 173.8V206.5M620.5 165.3V202.2M621.5 175.6V225.0M622.5 168.8V225.2M623.5 169.6V211.7M624.5 162.3V234.0M625.5 160.3V208.9M626.5 174.5V217.7M627.5 161.2V203.9M628.5 169.7V205.4M629.5 168.1V211.6M630.5 170.5V215.5M631.5 162.6V216.8M632.5 176.2V206.0M633.5 167.0V208.1M634.5 158.5V210.9M635.5 171.0V209.7M636.5 147.8V209.9M637.5 173.7V218.7M638.5 167.4V222.3M639.5 172.2V201.7M640.5 173.0V224.1M641.5 175.8V213.1M642.5 172.6V214.4M643.5 169.4V214.4M644.5 174.1V220.1M645.5 161.2V217.7M646.5 154.4V203.1M647.5 177.4V219.5M648.5 161.7V205.1M649.5 167.0V215.1M650.5 166.0V214.3M651.5 139.7V204.3M652.5 157.5V212.7M653.5 164.6V210.6M654.5 166.6V208.1M655.5 179.5V235.5M656.5 161.0V214.0M657.5 170.6V210.5M658.5 164.4V231.1M659.5 165.9V212.6M660.5 157.1V212.5M661.5 143.5V202.1M662.5 156.2V221.1M663.5 154.1V223.1M664.5 168.2V243.3M665.5 163.2V206.9M666.5 158.9V226.4M667.5 175.6V230.7M668.5 137.2V222.8M669.5 166.1V217.2M670.5 174.3V205.2M671.5 148.7V221.6M672.5 141.7V211.7M673.5 168.1V204.5M674.5 167.0V220.6M675.5 121.6V216.1M676.5 165.4V212.9M677.5 178.0V237.9M678.5 170.0V213.6M679.5 144.0V203.2M680.5 161.3V201.7M681.5 159.5V223.1M682.5 154.2V212.2M683.5 155.8V212.0M684.5 161.4V204.5M685.5 174.8V207.9M686.5 162.5V206.7M687.5 174.2V213.0M688.5 165.4V210.2M689.5 147.5V208.2M690.5 159.8V216.3M691.5 163.8V209.5M692.5 166.5V216.8M693.5 156.1V198.3M694.5 156.3V208.0M695.5 174.4V226.0M696.5 163.5V218.8M697.5 147.7V207.6M698.5 159.2V214.0M699.5 170.5V217.0M700.5 170.4V215.7M701.5 178.6V240.3M702.5 171.1V211.1M703.5 148.4V222.8M704.5 166.0V211.3M705.5 171.3V209.3M706.5 171.1V205.9M707.5 168.0V211.5M708.5 162.9V216.4M709.5 170.2V211.4M710.5 172.6V214.0M711.5 161.0V214.7M712.5 152.4V218.4M713.5 171.5V214.4M714.5 170.9V225.6M715.5 157.2V217.7M716.5 176.6V225.6M717.5 172.1V211.9M718.5 170.3V223.5M719.5 167.3V212.9M720.5 170.6V202.7M721.5 174.3V211.7M722.5 166.3V210.6M723.5 176.0V203.4M724.5 178.5V205.6M725.5 179.4V207.7M726.5 162.5V237.3M727.5 178.4V214.2M728.5 165.3V230.3M729.5 163.4V219.8M730.5 162.1V221.3M731.5 170.1V218.6M732.5 172.6V203.2M733.5 168.3V223.2M734.5 172.9V205.5M735.5 176.5V215.2M736.5 157.5V211.0M737.5 174.6V227.6M738.5 150.9V222.6M739.5 164.8V230.4M740.5 172.0V215.7M741.5 165.5V211.8M742.5 157.8V218.2M743.5 177.0V239.0M744.5 174.7V216.0M745.5 175.4V212.1M746.5 167.7V204.4M747.5 165.8V207.0M748.5 168.7V211.2M749.5 173.7V217.4M750.5 172.5V216.9M751.5 158.3V211.1M752.5 159.0V212.8M753.5 168.0V226.6M754.5 176.7V230.7M755.5 163.8V222.7M756.5 166.7V226.6M757.5 166.9V223.2M758.5 151.7V230.5M759.5 162.0V204.4M760.5 174.9V208.4M761.5 174.9V213.7M762.5 156.0V215.0M763.5 167.2V224.4M764.5 161.3V201.9M765.5 169.6V213.2M766.5 174.8V214.1M767.5 165.3V208.0M768.5 152.5V211.1M769.5 165.3V221.1M770.5 174.7V216.4M771.5 170.1V211.5M772.5 171.0V214.0M773.5 166.4V213.0M774.5 157.8V222.0M775.5 145.1V212.0M776.5 164.9V221.8M777.5 169.9V210.3M778.5 166.3V213.0M779.5 166.8V208.1M780.5 166.1V213.6M781.5 163.0V225.9M782.5 166.5V209.0M783.5 172.3V212.1M784.5 160.6V214.7M785.5 167.4V212.7M786.5 172.7V222.3M787.5 156.9V206.4M788.5 168.2V224.7M789.5 143.2V227.9M790.5 159.7V233.7M791.5 165.2V217.3M792.5 171.4V210.2M793.5 167.6V204.6M794.5 156.5V220.9M795.5 171.3V223.5M796.5 153.9V217.9M797.5 176.7V219.2M798.5 164.6V223.2M799.5 158.8V215.1M800.5 162.6V205.4M801.5 160.4V204.8M802.5 155.7V208.2M803.5 170.5V207.5M804.5 171.9V204.4M805.5 162.1V214.2M806.5 151.4V207.7M807.5 161.0V221.8M808.5 166.5V214.6M809.5 159.3V221.7M810.5 160.6V206.7M811.5 173.9V207.1M812.5 177.5V207.7M813.5 172.4V217.4M814.5 175.1V259.1M815.5 169.1V218.8M816.5 173.2V216.0M817.5 170.2V219.9M818.5 161.6V215.6M819.5 163.6V230.6M820.5 166.0V217.9M821.5 147.8V210.1M822.5 166.0V204.4M823.5 164.4V217.4M824.5 149.7V223.5M825.5 173.4V215.4M826.5 175.1V208.0M827.5 153.7V211.3M828.5 164.1V211.1M829.5 161.6V219.0M830.5 161.0V213.3M831.5 158.9V225.3M832.5 170.8V212.4M833.5 167.2V208.8M834.5 174.8V233.3M835.5 165.4V206.3M836.5 165.9V207.8M837.5 170.8V235.5M838.5 161.6V214.6M839.5 128.9V230.7M840.5 175.0V200.0M841.5 160.6V224.1M842.5 159.4V212.5M843.5 158.2V213.1M844.5 173.3V216.1M845.5 156.7V198.9M846.5 162.4V206.4M847.5 168.9V215.7M848.5 170.4V255.9M849.5 166.0V207.1M850.5 159.5V239.0M851.5 160.0V217.3M852.5 141.3V221.2M853.5 170.4V206.0M854.5 162.5V217.1M855.5 170.9V206.5M856.5 160.9V204.7M857.5 166.8V223.9M858.5 171.9V207.4M859.5 176.0V208.6M860.5 173.0V217.8M861.5 165.8V206.8M862.5 153.1V204.4M863.5 161.0V213.8M864.5 175.3V214.1M865.5 171.3V226.8M866.5 167.6V205.1M867.5 168.9V218.0M868.5 167.5V218.0M869.5 161.4V209.0M870.5 166.5V210.8M871.5 172.9V212.2M872.5 178.9V205.6M873.5 170.8V204.1M874.5 178.0V217.9M875.5 169.7V205.4M876.5 166.1V205.8M877.5 176.6V218.7M878.5 169.8V208.3M879.5 171.2V209.1M880.5 149.4V203.7M881.5 165.4V204.5M882.5 179.2V203.8M883.5 165.7V203.8M884.5 165.9V223.3" fill="none" stroke="#0000ff" stroke-width="1.0" opacity="1.0"/></g><line x1="36.5" y1="114" x2="36.5" y2="262.5" stroke="#555" stroke-width="1"/><line x1="36" y1="262" x2="885.5" y2="262" stroke="#666" stroke-width="1.3"/><line x1="36.5" y1="261.9" x2="38.0" y2="261.9" stroke="#555" stroke-width="0.8"/><line x1="36.5" y1="256.4" x2="38.0" y2="256.4" stroke="#555" stroke-width="0.8"/><line x1="36.5" y1="250.9" x2="38.0" y2="250.9" stroke="#555" stroke-width="0.8"/><line x1="36.5" y1="245.4" x2="39.0" y2="245.4" stroke="#555" stroke-width="0.8"/><line x1="36.5" y1="239.9" x2="38.0" y2="239.9" stroke="#555" stroke-width="0.8"/><line x1="36.5" y1="234.4" x2="38.0" y2="234.4" stroke="#555" stroke-width="0.8"/><line x1="36.5" y1="228.9" x2="38.0" y2="228.9" stroke="#555" stroke-width="0.8"/><line x1="36.5" y1="223.4" x2="38.0" y2="223.4" stroke="#555" stroke-width="0.8"/><line x1="36.5" y1="217.9" x2="39.0" y2="217.9" stroke="#555" stroke-width="0.8"/><line x1="36.5" y1="212.4" x2="38.0" y2="212.4" stroke="#555" stroke-width="0.8"/><line x1="36.5" y1="206.9" x2="38.0" y2="206.9" stroke="#555" stroke-width="0.8"/><line x1="36.5" y1="201.4" x2="38.0" y2="201.4" stroke="#555" stroke-width="0.8"/><line x1="36.5" y1="195.9" x2="38.0" y2="195.9" stroke="#555" stroke-width="0.8"/><line x1="36.5" y1="190.4" x2="39.0" y2="190.4" stroke="#555" stroke-width="0.8"/><line x1="36.5" y1="184.9" x2="38.0" y2="184.9" stroke="#555" stroke-width="0.8"/><line x1="36.5" y1="179.4" x2="38.0" y2="179.4" stroke="#555" stroke-width="0.8"/><line x1="36.5" y1="173.9" x2="38.0" y2="173.9" stroke="#555" stroke-width="0.8"/><line x1="36.5" y1="168.4" x2="38.0" y2="168.4" stroke="#555" stroke-width="0.8"/><line x1="36.5" y1="162.9" x2="39.0" y2="162.9" stroke="#555" stroke-width="0.8"/><line x1="36.5" y1="157.4" x2="38.0" y2="157.4" stroke="#555" stroke-width="0.8"/><line x1="36.5" y1="151.9" x2="38.0" y2="151.9" stroke="#555" stroke-width="0.8"/><line x1="36.5" y1="146.4" x2="38.0" y2="146.4" stroke="#555" stroke-width="0.8"/><line x1="36.5" y1="140.9" x2="38.0" y2="140.9" stroke="#555" stroke-width="0.8"/><line x1="36.5" y1="135.4" x2="39.0" y2="135.4" stroke="#555" stroke-width="0.8"/><line x1="36.5" y1="129.9" x2="38.0" y2="129.9" stroke="#555" stroke-width="0.8"/><line x1="36.5" y1="124.4" x2="38.0" y2="124.4" stroke="#555" stroke-width="0.8"/><line x1="36.5" y1="118.9" x2="38.0" y2="118.9" stroke="#555" stroke-width="0.8"/><line x1="36.4" y1="262" x2="36.4" y2="259.5" stroke="#555" stroke-width="0.8"/><line x1="78.8" y1="262" x2="78.8" y2="260.5" stroke="#555" stroke-width="0.8"/><line x1="121.3" y1="262" x2="121.3" y2="260.5" stroke="#555" stroke-width="0.8"/><line x1="163.7" y1="262" x2="163.7" y2="260.5" stroke="#555" stroke-width="0.8"/><line x1="206.1" y1="262" x2="206.1" y2="260.5" stroke="#555" stroke-width="0.8"/><line x1="248.6" y1="262" x2="248.6" y2="259.5" stroke="#555" stroke-width="0.8"/><line x1="291.0" y1="262" x2="291.0" y2="260.5" stroke="#555" stroke-width="0.8"/><line x1="333.4" y1="262" x2="333.4" y2="260.5" stroke="#555" stroke-width="0.8"/><line x1="375.8" y1="262" x2="375.8" y2="260.5" stroke="#555" stroke-width="0.8"/><line x1="418.3" y1="262" x2="418.3" y2="260.5" stroke="#555" stroke-width="0.8"/><line x1="460.7" y1="262" x2="460.7" y2="259.5" stroke="#555" stroke-width="0.8"/><line x1="503.1" y1="262" x2="503.1" y2="260.5" stroke="#555" stroke-width="0.8"/><line x1="545.6" y1="262" x2="545.6" y2="260.5" stroke="#555" stroke-width="0.8"/><line x1="588.0" y1="262" x2="588.0" y2="260.5" stroke="#555" stroke-width="0.8"/><line x1="630.4" y1="262" x2="630.4" y2="260.5" stroke="#555" stroke-width="0.8"/><line x1="672.9" y1="262" x2="672.9" y2="259.5" stroke="#555" stroke-width="0.8"/><line x1="715.3" y1="262" x2="715.3" y2="260.5" stroke="#555" stroke-width="0.8"/><line x1="757.7" y1="262" x2="757.7" y2="260.5" stroke="#555" stroke-width="0.8"/><line x1="800.1" y1="262" x2="800.1" y2="260.5" stroke="#555" stroke-width="0.8"/><line x1="842.6" y1="262" x2="842.6" y2="260.5" stroke="#555" stroke-width="0.8"/><line x1="885.0" y1="262" x2="885.0" y2="259.5" stroke="#555" stroke-width="0.8"/></svg><div class="lab" style="right:866px;top:131.9px">5</div><div class="lab" style="right:866px;top:159.4px">2.5</div><div class="lab" style="right:866px;top:186.9px">0</div><div class="lab" style="right:866px;top:214.4px">-2.5</div><div class="lab" style="right:866px;top:241.9px">-5</div><svg class="a" style="left:8px;top:185px" width="9" height="8"><ellipse cx="4.5" cy="4" rx="3" ry="2.3" fill="none" stroke="#333" stroke-width="0.9"/></svg><div class="lab" style="left:21.4px;width:30px;text-align:center;top:263px">0</div><div class="lab" style="left:233.6px;width:30px;text-align:center;top:263px">0.5</div><div class="lab" style="left:445.7px;width:30px;text-align:center;top:263px">1</div><div class="lab" style="left:657.9px;width:30px;text-align:center;top:263px">1.5</div><div class="lab" style="left:870.0px;width:30px;text-align:center;top:263px">2</div><div class="lab mono" style="left:430px;width:60px;text-align:center;top:271px;font-size:6px;font-weight:bold">Time(s)</div><div class="a" style="left:772px;top:121px;width:108px;height:37px;background:#fff;border:1px solid #3a3a3a;border-radius:1px"></div><div class="a" style="left:775px;top:128px;width:17px;height:1px;background:#d87070;box-shadow:0 1px 0 #d8707080"></div><div class="a" style="left:796px;top:125.0px;font-size:6px;line-height:8px;color:#333;letter-spacing:-0.45px">CH1</div><div class="a" style="left:811px;top:128px;width:17px;height:1px;background:#f4f070;box-shadow:0 1px 0 #f4f07080"></div><div class="a" style="left:832px;top:125.0px;font-size:6px;line-height:8px;color:#333;letter-spacing:-0.45px">CH4</div><div class="a" style="left:845px;top:128px;width:17px;height:1px;background:#70e0e0;box-shadow:0 1px 0 #70e0e080"></div><div class="a" style="left:866px;top:125.0px;font-size:6px;line-height:8px;color:#333;letter-spacing:-0.45px">CH7</div><div class="a" style="left:775px;top:139px;width:17px;height:1px;background:#767676;box-shadow:0 1px 0 #76767680"></div><div class="a" style="left:796px;top:136.0px;font-size:6px;line-height:8px;color:#333;letter-spacing:-0.45px">CH2</div><div class="a" style="left:811px;top:139px;width:17px;height:1px;background:#70e070;box-shadow:0 1px 0 #70e07080"></div><div class="a" style="left:832px;top:136.0px;font-size:6px;line-height:8px;color:#333;letter-spacing:-0.45px">CH5</div><div class="a" style="left:845px;top:139px;width:17px;height:1px;background:#e070e0;box-shadow:0 1px 0 #e070e080"></div><div class="a" style="left:866px;top:136.0px;font-size:6px;line-height:8px;color:#333;letter-spacing:-0.45px">CH8</div><div class="a" style="left:775px;top:150px;width:17px;height:1px;background:#6868c0;box-shadow:0 1px 0 #6868c080"></div><div class="a" style="left:796px;top:147.0px;font-size:6px;line-height:8px;color:#333;letter-spacing:-0.45px">CH3</div><div class="a" style="left:811px;top:150px;width:17px;height:1px;background:#6060d8;box-shadow:0 1px 0 #6060d880"></div><div class="a" style="left:832px;top:147.0px;font-size:6px;line-height:8px;color:#333;letter-spacing:-0.45px">CH6</div><div class="a mono" style="left:327px;top:296px;height:8px;line-height:8px;font-size:5.38px;color:#000;white-space:nowrap;font-weight:normal;-webkit-text-stroke:0.15px #000">FreqGraph:F<svg width="5.6" height="5.6" viewBox="-0.5 -0.5 7 7" style="vertical-align:middle;margin:0 0.3px;opacity:1.0"><path d="M0.5 0.5H2.5M1.5 0.5V6M0 3H2.5M3 0.5H6V6H3ZM3 3H6" fill="none" stroke="#111" stroke-width="1.0"/></svg><svg width="5.6" height="5.6" viewBox="-0.5 -0.5 7 7" style="vertical-align:middle;margin:0 0.3px;opacity:1.0"><path d="M0.5 1H5.5M2 0V6M4 0V6M0 3.5H6M0.5 6H5.5" fill="none" stroke="#111" stroke-width="1.0"/></svg><svg width="5.6" height="5.6" viewBox="-0.5 -0.5 7 7" style="vertical-align:middle;margin:0 0.3px;opacity:1.0"><path d="M0.5 0.5H5.5V2.5H0.5ZM0 4H6M3.5 4V6H2M1.5 4L0.5 6" fill="none" stroke="#111" stroke-width="1.0"/></svg><svg width="5.6" height="5.6" viewBox="-0.5 -0.5 7 7" style="vertical-align:middle;margin:0 0.3px;opacity:1.0"><path d="M3 0V2M0 2H6M1 3.5H5M0.5 5H5.5M3 2V6" fill="none" stroke="#111" stroke-width="1.0"/></svg>-Freq:65536.00-Point:131072-Period:2</div><div class="btn" style="left:827px;top:294px;width:40px;height:12px;text-align:center;line-height:9px"><svg width="6.6" height="7" viewBox="-0.5 -0.5 7 7" style="vertical-align:middle;margin:0 0.3px;opacity:1.0"><path d="M3 0V2M0 2H6M1 3.5H5M0.5 5H5.5M3 2V6" fill="none" stroke="#222" stroke-width="1.15"/></svg><svg width="6.6" height="7" viewBox="-0.5 -0.5 7 7" style="vertical-align:middle;margin:0 0.3px;opacity:1.0"><path d="M1 0.5V6M0 2H2.5M3 1H6M4.5 1V6M3 3.5H6M3 6H6" fill="none" stroke="#222" stroke-width="1.15"/></svg></div><div class="btn" style="left:871px;top:294px;width:22px;height:12px"></div><div class="a" style="left:877px;top:296px;width:9px;height:8px;background:#fff"></div><svg class="a" style="left:877px;top:296px" width="9" height="8"><path d="M2.3 1.3 L6.7 5.7 M6.7 1.3 L2.3 5.7" stroke="#222" stroke-width="1.05"/></svg><svg class="a" style="left:0;top:0" width="900" height="484"><line x1="37" y1="444.0" x2="885" y2="444.0" stroke="#ededed" stroke-width="1"/><line x1="37" y1="424.4" x2="885" y2="424.4" stroke="#ededed" stroke-width="1"/><line x1="37" y1="404.7" x2="885" y2="404.7" stroke="#ededed" stroke-width="1"/><line x1="37" y1="385.1" x2="885" y2="385.1" stroke="#ededed" stroke-width="1"/><line x1="37" y1="365.5" x2="885" y2="365.5" stroke="#ededed" stroke-width="1"/><line x1="37" y1="345.9" x2="885" y2="345.9" stroke="#ededed" stroke-width="1"/><line x1="37" y1="326.2" x2="885" y2="326.2" stroke="#ededed" stroke-width="1"/><line x1="201.9" y1="317" x2="201.9" y2="463.5" stroke="#ededed" stroke-width="1"/><line x1="367.8" y1="317" x2="367.8" y2="463.5" stroke="#ededed" stroke-width="1"/><line x1="533.7" y1="317" x2="533.7" y2="463.5" stroke="#ededed" stroke-width="1"/><line x1="699.6" y1="317" x2="699.6" y2="463.5" stroke="#ededed" stroke-width="1"/><line x1="865.5" y1="317" x2="865.5" y2="463.5" stroke="#ededed" stroke-width="1"/><path d="M37.5 463.6V463.2M38.0 463.6V463.2M41.5 463.6V463.0M42.0 463.6V463.1M47.5 463.6V463.1M49.0 463.6V463.0M50.5 463.6V463.2M51.0 463.6V463.1M55.5 463.6V463.3M58.0 463.6V463.3M58.5 463.6V463.2M60.0 463.6V463.1M62.0 463.6V463.2M64.5 463.6V463.2M66.0 463.6V463.0M72.0 463.6V463.3M74.0 463.6V463.2M74.5 463.6V463.0M75.0 463.6V463.1M77.0 463.6V463.3M77.5 463.6V463.2M78.0 463.6V463.2M79.0 463.6V463.2M79.5 463.6V463.1M80.5 463.6V463.2M81.5 463.6V463.1M82.0 463.6V463.0M82.5 463.6V463.0M84.0 463.6V463.1M89.5 463.6V463.2M90.5 463.6V463.2M91.5 463.6V463.1M92.0 463.6V463.2M93.0 463.6V462.9M94.5 463.6V463.1M95.0 463.6V463.2M95.5 463.6V462.8M99.5 463.6V463.3M102.0 463.6V462.9M102.5 463.6V463.1M105.0 463.6V463.2M106.0 463.6V463.3M108.5 463.6V463.2M111.0 463.6V463.0M112.5 463.6V463.3M114.5 463.6V463.0M115.5 463.6V463.0M116.0 463.6V462.9M120.0 463.6V463.1M128.0 463.6V463.2M132.0 463.6V463.3M133.0 463.6V463.2M134.0 463.6V463.2M135.0 463.6V463.1M135.5 463.6V463.0M136.0 463.6V463.1M137.5 463.6V463.1M144.0 463.6V463.3M145.0 463.6V463.1M148.5 463.6V462.9M149.5 463.6V463.3M150.5 463.6V463.1M151.0 463.6V463.1M152.5 463.6V463.1M153.5 463.6V463.3M154.5 463.6V463.0M158.0 463.6V463.1M160.5 463.6V463.1M163.0 463.6V463.3M164.5 463.6V463.0M166.5 463.6V463.2M168.0 463.6V463.1M168.5 463.6V463.2M170.0 463.6V463.2M170.5 463.6V463.2M171.5 463.6V463.2M173.0 463.6V463.0M177.0 463.6V463.2M179.0 463.6V463.3M180.0 463.6V463.1M184.0 463.6V463.1M184.5 463.6V463.2M185.5 463.6V463.1M187.5 463.6V463.2M188.5 463.6V462.5M189.0 463.6V463.2M191.0 463.6V463.0M191.5 463.6V463.2M193.0 463.6V463.1M194.5 463.6V462.7M199.0 463.6V462.8M199.5 463.6V463.2M200.0 463.6V462.7M202.5 463.6V463.0M205.5 463.6V463.2M207.0 463.6V463.2M210.0 463.6V462.7M210.5 463.6V463.3M212.0 463.6V463.3M213.5 463.6V462.8M215.0 463.6V463.1M215.5 463.6V463.0M216.0 463.6V463.2M216.5 463.6V463.2M217.0 463.6V462.9M220.0 463.6V463.1M226.0 463.6V463.1M230.5 463.6V463.2M232.0 463.6V463.1M232.5 463.6V462.9M235.5 463.6V463.1M242.0 463.6V463.1M243.0 463.6V463.2M246.5 463.6V463.1M247.5 463.6V463.2M248.5 463.6V463.2M249.0 463.6V463.2M250.5 463.6V463.1M251.5 463.6V462.9M252.0 463.6V463.1M252.5 463.6V463.0M254.5 463.6V463.1M255.0 463.6V463.2M257.0 463.6V463.1M258.5 463.6V463.1M260.0 463.6V463.3M260.5 463.6V463.2M263.5 463.6V463.3M264.0 463.6V463.1M266.0 463.6V463.0M267.0 463.6V463.3M267.5 463.6V462.8M269.5 463.6V462.8M270.5 463.6V463.1M272.5 463.6V463.1M273.5 463.6V463.2M275.5 463.6V463.1M276.5 463.6V463.3M277.0 463.6V463.2M278.5 463.6V462.9M280.5 463.6V463.2M281.0 463.6V463.3M283.5 463.6V463.2M285.0 463.6V463.2M285.5 463.6V463.2M287.5 463.6V463.3M288.0 463.6V463.3M292.0 463.6V463.3M295.0 463.6V463.2M295.5 463.6V463.2M297.0 463.6V463.2M298.0 463.6V463.2M298.5 463.6V463.3M299.5 463.6V463.1M301.5 463.6V463.2M306.5 463.6V463.3M307.0 463.6V463.2M308.5 463.6V463.2M309.5 463.6V463.3M310.0 463.6V463.3M310.5 463.6V463.3M312.0 463.6V463.3M313.5 463.6V463.2M317.5 463.6V463.1M319.5 463.6V463.2M320.0 463.6V463.2M321.5 463.6V463.3M322.5 463.6V463.1M323.5 463.6V463.2M324.5 463.6V463.2M326.5 463.6V463.2M327.0 463.6V463.2M328.0 463.6V463.0M329.0 463.6V463.1M330.5 463.6V463.0M331.5 463.6V463.1M332.5 463.6V463.0M333.0 463.6V462.8M334.0 463.6V462.9M337.0 463.6V463.1M337.5 463.6V463.2M339.0 463.6V463.2M339.5 463.6V463.1M340.0 463.6V463.0M341.0 463.6V463.1M342.5 463.6V463.1M344.0 463.6V463.1M344.5 463.6V463.2M345.5 463.6V463.2M346.0 463.6V463.1M346.5 463.6V463.2M348.0 463.6V463.3M349.0 463.6V463.2M349.5 463.6V463.1M350.0 463.6V463.3M351.5 463.6V463.2M352.0 463.6V463.2M358.5 463.6V462.9M360.0 463.6V463.1M360.5 463.6V462.9M361.0 463.6V463.1M361.5 463.6V463.2M362.5 463.6V462.8M363.5 463.6V463.2M364.5 463.6V462.8M365.0 463.6V462.9M365.5 463.6V463.3M366.5 463.6V463.2M367.0 463.6V463.2M367.5 463.6V463.1M368.0 463.6V463.2M368.5 463.6V463.1M369.5 463.6V463.3M370.5 463.6V463.3M371.5 463.6V463.2M374.5 463.6V463.0M376.5 463.6V463.2M377.0 463.6V463.1M378.0 463.6V463.2M378.5 463.6V463.2M379.0 463.6V463.1M382.0 463.6V463.1M386.5 463.6V462.8M388.0 463.6V463.0M389.0 463.6V463.3M393.5 463.6V463.2M395.0 463.6V463.0M396.0 463.6V463.1M396.5 463.6V463.2M397.5 463.6V463.2M400.0 463.6V463.2M400.5 463.6V463.2M401.0 463.6V463.3M401.5 463.6V463.2M403.5 463.6V463.0M404.5 463.6V463.0M407.0 463.6V463.1M415.5 463.6V463.0M416.0 463.6V463.1M417.5 463.6V463.2M419.5 463.6V463.1M420.5 463.6V463.2M421.5 463.6V463.2M422.0 463.6V463.2M425.0 463.6V463.3M425.5 463.6V463.0M426.0 463.6V463.2M426.5 463.6V463.3M427.0 463.6V463.2M428.5 463.6V463.0M429.0 463.6V462.8M430.0 463.6V463.2M430.5 463.6V463.2M431.0 463.6V463.2M431.5 463.6V463.2M432.0 463.6V463.1M432.5 463.6V463.3M433.0 463.6V463.2M435.0 463.6V463.2M435.5 463.6V463.2M436.5 463.6V463.2M437.0 463.6V462.9M437.5 463.6V463.0M439.5 463.6V462.9M440.5 463.6V463.2M441.0 463.6V463.2M445.5 463.6V463.2M446.5 463.6V462.7M447.5 463.6V462.9M452.5 463.6V463.2M455.5 463.6V462.8M456.5 463.6V463.3M457.0 463.6V463.0M458.5 463.6V463.3M459.0 463.6V463.1M461.0 463.6V463.2M461.5 463.6V463.2M462.5 463.6V463.1M463.5 463.6V463.1M464.0 463.6V463.3M465.5 463.6V463.3M466.0 463.6V463.1M467.5 463.6V463.1M470.0 463.6V463.2M473.0 463.6V462.9M477.0 463.6V463.1M478.0 463.6V463.2M479.0 463.6V463.2M480.5 463.6V463.2M482.0 463.6V463.2M483.0 463.6V462.9M484.5 463.6V463.2M485.0 463.6V462.9M485.5 463.6V463.2M486.0 463.6V462.8M486.5 463.6V463.1M488.0 463.6V462.8M490.0 463.6V463.2M492.5 463.6V463.3M493.0 463.6V463.2M493.5 463.6V463.3M494.5 463.6V463.1M497.0 463.6V462.9M497.5 463.6V463.3M499.0 463.6V463.1M499.5 463.6V462.9M505.0 463.6V463.2M507.0 463.6V463.2M508.5 463.6V463.2M509.5 463.6V463.2M510.5 463.6V463.3M512.5 463.6V463.1M513.0 463.6V463.2M516.0 463.6V463.2M517.5 463.6V463.2M519.0 463.6V463.1M521.0 463.6V463.0M521.5 463.6V462.9M523.0 463.6V463.2M524.5 463.6V463.2M527.0 463.6V463.2M527.5 463.6V463.0M528.0 463.6V463.3M530.0 463.6V463.0M530.5 463.6V462.8M533.5 463.6V463.2M536.0 463.6V462.9M541.0 463.6V463.0M541.5 463.6V462.6M542.0 463.6V462.9M543.5 463.6V463.1M544.0 463.6V463.2M544.5 463.6V463.2M545.0 463.6V462.7M548.0 463.6V462.8M548.5 463.6V463.3M549.0 463.6V463.2M550.0 463.6V463.2M551.0 463.6V463.3M552.0 463.6V463.2M552.5 463.6V463.2M553.0 463.6V463.1M553.5 463.6V463.1M554.5 463.6V463.2M555.0 463.6V463.2M557.0 463.6V463.1M563.0 463.6V462.9M567.5 463.6V463.0M568.0 463.6V463.0M568.5 463.6V463.1M571.5 463.6V463.2M572.5 463.6V462.7M573.0 463.6V463.3M575.5 463.6V463.1M578.0 463.6V463.0M578.5 463.6V463.3M581.0 463.6V463.2M583.5 463.6V463.1M585.5 463.6V463.3M591.0 463.6V463.2M596.0 463.6V463.2M596.5 463.6V463.2M598.5 463.6V463.3M600.0 463.6V463.3M601.0 463.6V462.6M602.5 463.6V463.2M603.5 463.6V462.8M604.0 463.6V463.2M604.5 463.6V463.2M605.5 463.6V463.2M611.5 463.6V463.0M612.5 463.6V463.1M615.5 463.6V463.1M616.0 463.6V463.3M617.0 463.6V463.1M620.0 463.6V463.2M621.5 463.6V463.0M623.0 463.6V463.2M624.0 463.6V463.1M625.0 463.6V463.0M627.5 463.6V463.2M628.0 463.6V463.1M629.0 463.6V463.2M629.5 463.6V462.8M634.0 463.6V463.0M635.0 463.6V463.1M637.0 463.6V463.3M637.5 463.6V463.2M638.5 463.6V463.3M639.0 463.6V462.8M641.0 463.6V463.3M641.5 463.6V462.8M643.0 463.6V463.1M644.0 463.6V463.2M649.5 463.6V463.2M650.5 463.6V463.2M651.5 463.6V463.3M653.0 463.6V462.9M654.0 463.6V463.0M654.5 463.6V463.0M657.5 463.6V463.3M659.0 463.6V463.2M663.0 463.6V463.2M664.0 463.6V463.2M664.5 463.6V463.0M666.0 463.6V463.1M666.5 463.6V463.2M671.0 463.6V462.9M677.0 463.6V463.1M678.5 463.6V462.9M680.5 463.6V463.0M683.5 463.6V463.3M684.0 463.6V463.2M685.0 463.6V463.1M687.0 463.6V462.8M688.0 463.6V463.2M689.0 463.6V463.0M692.5 463.6V463.0M693.0 463.6V463.3M694.0 463.6V463.3M694.5 463.6V463.3M696.5 463.6V462.9M698.0 463.6V463.3M700.5 463.6V463.0M704.5 463.6V463.0M705.5 463.6V463.1M707.5 463.6V463.1M708.0 463.6V463.2M709.5 463.6V463.2M710.5 463.6V462.6M711.5 463.6V463.2M712.0 463.6V463.2M714.0 463.6V463.0M715.5 463.6V463.1M716.5 463.6V463.1M717.5 463.6V463.1M718.0 463.6V462.9M719.5 463.6V463.1M720.5 463.6V463.2M721.0 463.6V463.3M722.0 463.6V463.2M722.5 463.6V463.3M725.0 463.6V463.1M725.5 463.6V463.2M726.0 463.6V463.1M726.5 463.6V463.2M727.0 463.6V463.1M727.5 463.6V463.2M729.0 463.6V463.3M729.5 463.6V463.1M730.0 463.6V463.3M731.0 463.6V463.2M734.0 463.6V463.2M735.5 463.6V463.3M738.0 463.6V463.3M739.5 463.6V463.3M740.5 463.6V463.2M743.0 463.6V463.1M743.5 463.6V463.3M744.5 463.6V463.2M745.0 463.6V463.0M746.0 463.6V463.2M747.5 463.6V463.1M748.5 463.6V463.2M749.0 463.6V463.2M750.0 463.6V463.1M751.5 463.6V462.9M752.0 463.6V463.2M753.0 463.6V463.1M753.5 463.6V463.3M755.0 463.6V463.1M756.0 463.6V462.6M756.5 463.6V463.2M760.5 463.6V463.2M763.0 463.6V463.0M765.5 463.6V463.2M767.0 463.6V463.2M768.0 463.6V463.3M769.5 463.6V463.3M770.5 463.6V463.2M771.0 463.6V463.2M772.5 463.6V463.1M774.0 463.6V463.3M774.5 463.6V463.0M775.0 463.6V463.2M775.5 463.6V463.2M780.0 463.6V463.1M781.5 463.6V463.0M782.0 463.6V463.2M783.0 463.6V463.2M784.0 463.6V463.3M790.0 463.6V463.0M795.0 463.6V463.2M796.0 463.6V463.2M798.5 463.6V462.8M799.5 463.6V463.3M801.0 463.6V463.2M805.0 463.6V463.2M805.5 463.6V463.1M806.5 463.6V463.1M808.0 463.6V463.3M810.0 463.6V463.3M814.0 463.6V463.1M816.5 463.6V463.2M820.5 463.6V463.0M821.5 463.6V463.1M826.0 463.6V463.1M827.5 463.6V463.2M828.5 463.6V463.2M829.5 463.6V463.2M830.0 463.6V463.0M830.5 463.6V463.1M831.0 463.6V463.2M832.0 463.6V463.0M833.0 463.6V463.2M833.5 463.6V463.3M834.0 463.6V463.1M835.0 463.6V463.2M835.5 463.6V463.3M836.5 463.6V463.0M840.0 463.6V463.2M840.5 463.6V463.2M842.0 463.6V463.1M843.5 463.6V463.2M844.5 463.6V463.3M847.5 463.6V463.1M848.0 463.6V463.0M849.0 463.6V463.2M851.0 463.6V463.3M854.0 463.6V463.3M854.5 463.6V463.2M856.0 463.6V463.2M856.5 463.6V463.1M859.0 463.6V463.3M859.5 463.6V462.7M860.0 463.6V463.3M861.0 463.6V463.1M862.0 463.6V463.1M864.0 463.6V463.1M865.0 463.6V463.2M869.0 463.6V463.1M871.5 463.6V462.9M872.0 463.6V463.2M872.5 463.6V463.2M874.0 463.6V463.1M879.0 463.6V463.1M881.5 463.6V463.3M882.0 463.6V463.1M882.5 463.6V463.3M883.5 463.6V463.2M884.0 463.6V463.2" stroke="#222" stroke-width="0.6" fill="none" opacity="1.0"/><path d="M46.5 463.6V463.2M47.0 463.6V461.6M47.5 463.6V459.1M48.0 463.6V462.4M48.5 463.6V463.0M49.0 463.6V460.7M49.5 463.6V459.7M50.0 463.6V460.1M50.5 463.6V461.7M51.0 463.6V461.1M51.5 463.6V460.9M52.0 463.6V459.9M52.5 463.6V458.6M53.0 463.6V461.5M53.5 463.6V459.7M54.0 463.6V461.8M54.5 463.6V460.6M55.0 463.6V462.5M55.5 463.6V462.3M56.0 463.6V460.8M56.5 463.6V462.5M57.0 463.6V460.2M57.5 463.6V462.0M58.0 463.6V461.2M58.5 463.6V461.4M59.0 463.6V461.8M59.5 463.6V461.2M60.0 463.6V460.0M60.5 463.6V457.4M61.0 463.6V462.8M61.5 463.6V461.0M62.0 463.6V461.6M62.5 463.6V462.5M63.0 463.6V461.0M63.5 463.6V462.4M64.0 463.6V461.4M64.5 463.6V459.8M65.5 463.6V461.0M66.0 463.6V460.8M66.5 463.6V462.5M67.0 463.6V460.7M67.5 463.6V460.9M68.0 463.6V461.8M68.5 463.6V459.8M69.0 463.6V463.0M69.5 463.6V460.5M70.0 463.6V461.6M70.5 463.6V462.7M71.0 463.6V461.6M71.5 463.6V461.8" stroke="#ffdd00" stroke-width="0.8" fill="none" opacity="1.0"/><path d="M78.5 463.6V457.6M79.0 463.6V462.3M79.5 463.6V459.6M80.0 463.6V460.1M80.5 463.6V455.6M81.0 463.6V461.4M81.5 463.6V456.5M82.0 463.6V462.8M82.5 463.6V457.8M83.0 463.6V458.8M83.5 463.6V457.4M84.0 463.6V460.0M84.5 463.6V463.1M85.0 463.6V462.1M85.5 463.6V454.2M86.0 463.6V457.0M86.5 463.6V460.0M87.0 463.6V454.7M87.5 463.6V459.5M88.0 463.6V459.4M88.5 463.6V460.8M89.0 463.6V453.3M89.5 463.6V450.8M90.0 463.6V460.0M90.5 463.6V456.1M91.0 463.6V454.0M91.5 463.6V450.5M92.0 463.6V462.7M92.5 463.6V456.8M93.0 463.6V455.5M93.5 463.6V461.8M94.0 463.6V456.5M94.5 463.6V457.3M95.0 463.6V456.0M95.5 463.6V459.6M96.0 463.6V457.2M96.5 463.6V459.9M97.0 463.6V457.1M97.5 463.6V458.3M98.0 463.6V459.6M98.5 463.6V462.1M99.0 463.6V455.4M99.5 463.6V456.7M100.0 463.6V457.3M100.5 463.6V460.6" stroke="#00dd00" stroke-width="0.8" fill="none" opacity="1.0"/><path d="M40.5 463.6V462.3M41.0 463.6V460.4M41.5 463.6V461.3M42.0 463.6V462.8M42.5 463.6V461.9M43.0 463.6V461.8M43.5 463.6V462.1M44.0 463.6V462.8M44.5 463.6V460.8M45.0 463.6V461.4M45.5 463.6V462.1M46.5 463.6V462.5M47.0 463.6V462.0M47.5 463.6V461.1M48.0 463.6V462.3M48.5 463.6V460.9M49.0 463.6V461.8M49.5 463.6V462.7M50.0 463.6V462.6M50.5 463.6V463.1M51.5 463.6V462.1M52.0 463.6V461.6M52.5 463.6V460.6M53.0 463.6V462.0M53.5 463.6V463.0M54.0 463.6V459.7M54.5 463.6V461.7M55.0 463.6V462.2M55.5 463.6V462.2M56.0 463.6V463.2M56.5 463.6V461.3M57.0 463.6V461.6M57.5 463.6V460.4M58.0 463.6V460.9M58.5 463.6V461.1M59.0 463.6V460.8M59.5 463.6V462.2M60.0 463.6V462.4M60.5 463.6V462.0M61.0 463.6V463.1M61.5 463.6V462.1M62.0 463.6V462.2M62.5 463.6V461.3M63.0 463.6V461.9M64.0 463.6V461.9M64.5 463.6V460.6M65.5 463.6V462.6M66.0 463.6V461.9M66.5 463.6V463.2M67.0 463.6V462.4M67.5 463.6V461.9M68.0 463.6V463.2M68.5 463.6V461.6M69.0 463.6V461.5M69.5 463.6V463.1M70.0 463.6V461.9M70.5 463.6V460.9M71.0 463.6V462.1M71.5 463.6V461.5M72.0 463.6V461.3M72.5 463.6V462.1M73.0 463.6V461.0M73.5 463.6V461.6M74.0 463.6V462.8M74.5 463.6V461.4M75.0 463.6V461.1M75.5 463.6V461.2M76.0 463.6V462.5M76.5 463.6V461.5M77.0 463.6V460.6M77.5 463.6V461.7M78.0 463.6V460.8M78.5 463.6V460.7M79.0 463.6V461.9M79.5 463.6V461.3M80.0 463.6V462.2M80.5 463.6V460.9M81.0 463.6V462.0M81.5 463.6V462.4M82.0 463.6V461.9M82.5 463.6V462.0M83.0 463.6V461.5M83.5 463.6V461.5M84.0 463.6V463.0M84.5 463.6V462.5M85.0 463.6V461.6M85.5 463.6V461.4M86.0 463.6V461.8M86.5 463.6V459.4M87.0 463.6V460.8M87.5 463.6V462.0M88.0 463.6V461.2M88.5 463.6V460.6M89.0 463.6V461.5M90.0 463.6V461.8M90.5 463.6V461.8M91.0 463.6V459.9M92.0 463.6V460.4M92.5 463.6V462.0M93.0 463.6V461.0M93.5 463.6V462.1M94.0 463.6V461.7M94.5 463.6V460.8M95.0 463.6V461.8M95.5 463.6V460.9M96.0 463.6V461.9M96.5 463.6V462.3M97.0 463.6V462.1M97.5 463.6V462.3M98.0 463.6V462.0M98.5 463.6V460.6M99.0 463.6V463.0M100.0 463.6V461.9M100.5 463.6V460.3M101.0 463.6V460.9M101.5 463.6V460.6M102.0 463.6V460.7M102.5 463.6V462.5M103.0 463.6V461.7M103.5 463.6V462.8M104.0 463.6V462.4M104.5 463.6V461.3M106.0 463.6V463.1M106.5 463.6V461.6M107.0 463.6V460.8M107.5 463.6V459.4M108.0 463.6V460.5M108.5 463.6V463.3M109.0 463.6V463.2M109.5 463.6V461.7M110.0 463.6V460.8" stroke="#0000ff" stroke-width="0.8" fill="none" opacity="1.0"/><path d="M145.5 463.6V462.5M146.0 463.6V462.5M146.5 463.6V462.1M147.0 463.6V462.3M147.5 463.6V461.7M148.0 463.6V461.3M148.5 463.6V462.0M149.0 463.6V461.5M149.5 463.6V460.5M150.0 463.6V462.9M150.5 463.6V462.9M151.0 463.6V461.7M151.5 463.6V460.6M152.0 463.6V461.9M152.5 463.6V461.2M153.0 463.6V462.3M153.5 463.6V461.3M154.0 463.6V462.6M154.5 463.6V461.5M155.0 463.6V461.7M155.5 463.6V461.7M156.0 463.6V460.9M156.5 463.6V461.1M157.0 463.6V462.5M157.5 463.6V461.3M158.5 463.6V461.1M159.0 463.6V459.6M159.5 463.6V461.5M160.0 463.6V461.5M160.5 463.6V461.9M161.0 463.6V461.2M161.5 463.6V462.3M162.0 463.6V461.3M162.5 463.6V462.2M163.0 463.6V462.3M163.5 463.6V461.8M164.0 463.6V461.9M165.0 463.6V460.0M165.5 463.6V461.7M166.5 463.6V460.8M167.0 463.6V461.8M167.5 463.6V461.6M168.0 463.6V461.1M168.5 463.6V462.6M169.0 463.6V462.6M169.5 463.6V461.9M170.0 463.6V461.5M170.5 463.6V460.8M171.0 463.6V462.5M171.5 463.6V462.0M172.0 463.6V461.3M172.5 463.6V462.0M173.0 463.6V461.9M173.5 463.6V461.4M174.0 463.6V462.7M174.5 463.6V460.0M175.0 463.6V462.6M175.5 463.6V461.6M176.0 463.6V461.9M176.5 463.6V462.3M177.0 463.6V461.0M177.5 463.6V460.5M178.0 463.6V459.9M178.5 463.6V460.9M179.0 463.6V462.0M179.5 463.6V460.5M180.0 463.6V463.1M180.5 463.6V461.4M181.0 463.6V460.8M181.5 463.6V460.8M182.0 463.6V462.7M182.5 463.6V463.1M183.0 463.6V459.4M183.5 463.6V462.0M184.5 463.6V462.8M185.0 463.6V461.3M185.5 463.6V459.9M186.0 463.6V461.3M186.5 463.6V459.8M187.0 463.6V461.0M187.5 463.6V460.7M188.0 463.6V460.0M188.5 463.6V461.7M189.0 463.6V460.8M189.5 463.6V461.7M190.0 463.6V462.0M190.5 463.6V460.3M191.0 463.6V462.2M191.5 463.6V461.0M192.0 463.6V462.2M192.5 463.6V461.2M193.0 463.6V461.8M193.5 463.6V459.6M194.0 463.6V461.0M194.5 463.6V461.0M195.0 463.6V458.8M195.5 463.6V462.2M196.0 463.6V462.6M196.5 463.6V462.4M197.0 463.6V461.1M197.5 463.6V460.4M198.0 463.6V460.1M198.5 463.6V460.7M199.0 463.6V462.2M199.5 463.6V458.6M200.0 463.6V460.6M200.5 463.6V461.4M201.0 463.6V462.6M201.5 463.6V460.4M202.0 463.6V461.7M202.5 463.6V461.6M203.0 463.6V460.7M203.5 463.6V460.7M204.0 463.6V462.2M204.5 463.6V459.2M205.0 463.6V462.4M205.5 463.6V462.6M206.0 463.6V460.6M206.5 463.6V460.8M207.0 463.6V460.9M207.5 463.6V461.6M208.0 463.6V461.0M208.5 463.6V461.8M209.5 463.6V460.0M210.0 463.6V462.5M210.5 463.6V461.4M211.0 463.6V460.1M211.5 463.6V461.0M212.0 463.6V457.3M212.5 463.6V463.0M213.0 463.6V462.1M213.5 463.6V461.0M214.0 463.6V459.3M214.5 463.6V461.5M215.0 463.6V463.1M215.5 463.6V459.6M216.0 463.6V462.4M216.5 463.6V461.4M217.0 463.6V460.0M217.5 463.6V462.1M218.0 463.6V461.8M218.5 463.6V460.6M219.0 463.6V461.5M219.5 463.6V460.9M220.0 463.6V462.5M220.5 463.6V461.4M221.0 463.6V462.7M221.5 463.6V463.3M222.0 463.6V459.1M222.5 463.6V460.8M223.0 463.6V460.2M223.5 463.6V462.6M224.0 463.6V461.4M224.5 463.6V461.7M225.0 463.6V463.1M225.5 463.6V460.8M226.0 463.6V462.3M226.5 463.6V461.7M227.0 463.6V463.3M227.5 463.6V460.4M228.0 463.6V460.7M228.5 463.6V461.1M229.0 463.6V462.6M229.5 463.6V462.2M230.0 463.6V460.2M230.5 463.6V461.9M231.0 463.6V461.3M231.5 463.6V461.5M232.0 463.6V462.9M232.5 463.6V460.0M233.5 463.6V461.5M234.0 463.6V461.8M235.0 463.6V461.4M235.5 463.6V461.2M236.0 463.6V461.7M236.5 463.6V462.6M237.0 463.6V461.3M237.5 463.6V460.7M238.0 463.6V461.6M238.5 463.6V460.1M239.0 463.6V461.0M239.5 463.6V461.1" stroke="#0000ff" stroke-width="0.8" fill="none" opacity="1.0"/><path d="M110.5 463.6V462.1M112.0 463.6V462.6M112.5 463.6V462.6M113.0 463.6V462.0M113.5 463.6V462.2M114.0 463.6V462.9M114.5 463.6V462.8M115.0 463.6V463.1M115.5 463.6V463.2M116.0 463.6V463.2M116.5 463.6V462.4M117.0 463.6V463.3M117.5 463.6V463.2M118.0 463.6V462.9M118.5 463.6V463.3M119.0 463.6V463.1M119.5 463.6V462.9M120.0 463.6V462.7M120.5 463.6V463.1M121.0 463.6V462.8M121.5 463.6V462.7M122.0 463.6V463.1M122.5 463.6V461.4M123.0 463.6V462.8M123.5 463.6V462.8M124.0 463.6V463.1M124.5 463.6V462.5M125.0 463.6V462.7M125.5 463.6V463.1M126.0 463.6V462.8M126.5 463.6V462.1M127.0 463.6V463.1M128.0 463.6V462.1M128.5 463.6V462.7M129.0 463.6V463.0M129.5 463.6V461.4M130.0 463.6V462.8M130.5 463.6V463.0M131.0 463.6V462.7M131.5 463.6V463.1M132.0 463.6V462.7M132.5 463.6V462.8M133.5 463.6V463.0M134.0 463.6V462.7M134.5 463.6V462.6M135.0 463.6V462.5M135.5 463.6V462.4M136.0 463.6V462.7M136.5 463.6V462.6M137.0 463.6V463.1M137.5 463.6V463.1M138.0 463.6V462.2M138.5 463.6V463.1M139.0 463.6V462.7M139.5 463.6V460.9M140.0 463.6V463.1M140.5 463.6V462.0M141.0 463.6V463.2M141.5 463.6V462.7M142.0 463.6V461.9M142.5 463.6V462.0M144.5 463.6V462.5M145.0 463.6V463.2M145.5 463.6V462.9M146.0 463.6V462.8M146.5 463.6V462.7M147.0 463.6V462.6M147.5 463.6V462.9M148.0 463.6V463.3M148.5 463.6V462.0M149.0 463.6V462.5M149.5 463.6V462.2" stroke="#101010" stroke-width="0.8" fill="none" opacity="1.0"/><line x1="46.1" y1="463.6" x2="46.1" y2="425.1" stroke="#ff2020" stroke-width="1.2"/><line x1="46.1" y1="463.6" x2="46.1" y2="440.8" stroke="#0000ff" stroke-width="1.2"/><line x1="56.0" y1="463.6" x2="56.0" y2="316.0" stroke="#ffee00" stroke-width="1.2"/><line x1="56.0" y1="463.6" x2="56.0" y2="443.2" stroke="#00dd00" stroke-width="1.2"/><line x1="56.0" y1="463.6" x2="56.0" y2="450.3" stroke="#0000ff" stroke-width="1.2"/><line x1="56.0" y1="463.6" x2="56.0" y2="459.7" stroke="#000066" stroke-width="1.2"/><line x1="59.6" y1="463.6" x2="59.6" y2="451.0" stroke="#0000ff" stroke-width="1.2"/><line x1="59.6" y1="463.6" x2="59.6" y2="459.7" stroke="#ffee00" stroke-width="1.2"/><line x1="66.0" y1="463.6" x2="66.0" y2="391.4" stroke="#ffdd00" stroke-width="1.2"/><line x1="66.0" y1="463.6" x2="66.0" y2="447.1" stroke="#0000ff" stroke-width="1.2"/><line x1="75.4" y1="463.6" x2="75.4" y2="439.3" stroke="#ffee00" stroke-width="1.2"/><line x1="75.4" y1="463.6" x2="75.4" y2="444.8" stroke="#00dd00" stroke-width="1.2"/><line x1="75.4" y1="463.6" x2="75.4" y2="454.2" stroke="#0000ff" stroke-width="1.2"/><line x1="78.7" y1="463.6" x2="78.7" y2="458.1" stroke="#000000" stroke-width="1.2"/><line x1="85.6" y1="463.6" x2="85.6" y2="429.1" stroke="#00dd00" stroke-width="1.2"/><line x1="85.6" y1="463.6" x2="85.6" y2="451.0" stroke="#0000ff" stroke-width="1.2"/><line x1="91.0" y1="463.6" x2="91.0" y2="457.3" stroke="#00dd00" stroke-width="1.2"/><line x1="92.4" y1="463.6" x2="92.4" y2="458.1" stroke="#00dd00" stroke-width="1.2"/><line x1="95.0" y1="463.6" x2="95.0" y2="443.2" stroke="#00dd00" stroke-width="1.2"/><line x1="302.4" y1="463.6" x2="302.4" y2="454.2" stroke="#0000cc" stroke-width="1.2"/><line x1="301.2" y1="463.6" x2="301.2" y2="459.7" stroke="#0000cc" stroke-width="1.2"/><line x1="566.7" y1="463.6" x2="566.7" y2="461.2" stroke="#0000cc" stroke-width="1.2"/><line x1="36.5" y1="317" x2="36.5" y2="464.0" stroke="#555" stroke-width="1"/><line x1="36" y1="463.5" x2="885.5" y2="463.5" stroke="#444" stroke-width="1.3"/><line x1="36.5" y1="463.6" x2="39.0" y2="463.6" stroke="#555" stroke-width="0.8"/><line x1="36.5" y1="459.7" x2="38.0" y2="459.7" stroke="#555" stroke-width="0.8"/><line x1="36.5" y1="455.8" x2="38.0" y2="455.8" stroke="#555" stroke-width="0.8"/><line x1="36.5" y1="451.8" x2="38.0" y2="451.8" stroke="#555" stroke-width="0.8"/><line x1="36.5" y1="447.9" x2="38.0" y2="447.9" stroke="#555" stroke-width="0.8"/><line x1="36.5" y1="444.0" x2="39.0" y2="444.0" stroke="#555" stroke-width="0.8"/><line x1="36.5" y1="440.1" x2="38.0" y2="440.1" stroke="#555" stroke-width="0.8"/><line x1="36.5" y1="436.1" x2="38.0" y2="436.1" stroke="#555" stroke-width="0.8"/><line x1="36.5" y1="432.2" x2="38.0" y2="432.2" stroke="#555" stroke-width="0.8"/><line x1="36.5" y1="428.3" x2="38.0" y2="428.3" stroke="#555" stroke-width="0.8"/><line x1="36.5" y1="424.4" x2="39.0" y2="424.4" stroke="#555" stroke-width="0.8"/><line x1="36.5" y1="420.4" x2="38.0" y2="420.4" stroke="#555" stroke-width="0.8"/><line x1="36.5" y1="416.5" x2="38.0" y2="416.5" stroke="#555" stroke-width="0.8"/><line x1="36.5" y1="412.6" x2="38.0" y2="412.6" stroke="#555" stroke-width="0.8"/><line x1="36.5" y1="408.7" x2="38.0" y2="408.7" stroke="#555" stroke-width="0.8"/><line x1="36.5" y1="404.7" x2="39.0" y2="404.7" stroke="#555" stroke-width="0.8"/><line x1="36.5" y1="400.8" x2="38.0" y2="400.8" stroke="#555" stroke-width="0.8"/><line x1="36.5" y1="396.9" x2="38.0" y2="396.9" stroke="#555" stroke-width="0.8"/><line x1="36.5" y1="393.0" x2="38.0" y2="393.0" stroke="#555" stroke-width="0.8"/><line x1="36.5" y1="389.0" x2="38.0" y2="389.0" stroke="#555" stroke-width="0.8"/><line x1="36.5" y1="385.1" x2="39.0" y2="385.1" stroke="#555" stroke-width="0.8"/><line x1="36.5" y1="381.2" x2="38.0" y2="381.2" stroke="#555" stroke-width="0.8"/><line x1="36.5" y1="377.2" x2="38.0" y2="377.2" stroke="#555" stroke-width="0.8"/><line x1="36.5" y1="373.3" x2="38.0" y2="373.3" stroke="#555" stroke-width="0.8"/><line x1="36.5" y1="369.4" x2="38.0" y2="369.4" stroke="#555" stroke-width="0.8"/><line x1="36.5" y1="365.5" x2="39.0" y2="365.5" stroke="#555" stroke-width="0.8"/><line x1="36.5" y1="361.6" x2="38.0" y2="361.6" stroke="#555" stroke-width="0.8"/><line x1="36.5" y1="357.6" x2="38.0" y2="357.6" stroke="#555" stroke-width="0.8"/><line x1="36.5" y1="353.7" x2="38.0" y2="353.7" stroke="#555" stroke-width="0.8"/><line x1="36.5" y1="349.8" x2="38.0" y2="349.8" stroke="#555" stroke-width="0.8"/><line x1="36.5" y1="345.9" x2="39.0" y2="345.9" stroke="#555" stroke-width="0.8"/><line x1="36.5" y1="341.9" x2="38.0" y2="341.9" stroke="#555" stroke-width="0.8"/><line x1="36.5" y1="338.0" x2="38.0" y2="338.0" stroke="#555" stroke-width="0.8"/><line x1="36.5" y1="334.1" x2="38.0" y2="334.1" stroke="#555" stroke-width="0.8"/><line x1="36.5" y1="330.1" x2="38.0" y2="330.1" stroke="#555" stroke-width="0.8"/><line x1="36.5" y1="326.2" x2="39.0" y2="326.2" stroke="#555" stroke-width="0.8"/><line x1="36.5" y1="322.3" x2="38.0" y2="322.3" stroke="#555" stroke-width="0.8"/><line x1="36.5" y1="318.4" x2="38.0" y2="318.4" stroke="#555" stroke-width="0.8"/><line x1="36.0" y1="463.5" x2="36.0" y2="461.0" stroke="#555" stroke-width="0.8"/><line x1="69.2" y1="463.5" x2="69.2" y2="462.0" stroke="#555" stroke-width="0.8"/><line x1="102.4" y1="463.5" x2="102.4" y2="462.0" stroke="#555" stroke-width="0.8"/><line x1="135.5" y1="463.5" x2="135.5" y2="462.0" stroke="#555" stroke-width="0.8"/><line x1="168.7" y1="463.5" x2="168.7" y2="462.0" stroke="#555" stroke-width="0.8"/><line x1="201.9" y1="463.5" x2="201.9" y2="461.0" stroke="#555" stroke-width="0.8"/><line x1="235.1" y1="463.5" x2="235.1" y2="462.0" stroke="#555" stroke-width="0.8"/><line x1="268.3" y1="463.5" x2="268.3" y2="462.0" stroke="#555" stroke-width="0.8"/><line x1="301.4" y1="463.5" x2="301.4" y2="462.0" stroke="#555" stroke-width="0.8"/><line x1="334.6" y1="463.5" x2="334.6" y2="462.0" stroke="#555" stroke-width="0.8"/><line x1="367.8" y1="463.5" x2="367.8" y2="461.0" stroke="#555" stroke-width="0.8"/><line x1="401.0" y1="463.5" x2="401.0" y2="462.0" stroke="#555" stroke-width="0.8"/><line x1="434.2" y1="463.5" x2="434.2" y2="462.0" stroke="#555" stroke-width="0.8"/><line x1="467.3" y1="463.5" x2="467.3" y2="462.0" stroke="#555" stroke-width="0.8"/><line x1="500.5" y1="463.5" x2="500.5" y2="462.0" stroke="#555" stroke-width="0.8"/><line x1="533.7" y1="463.5" x2="533.7" y2="461.0" stroke="#555" stroke-width="0.8"/><line x1="566.9" y1="463.5" x2="566.9" y2="462.0" stroke="#555" stroke-width="0.8"/><line x1="600.1" y1="463.5" x2="600.1" y2="462.0" stroke="#555" stroke-width="0.8"/><line x1="633.2" y1="463.5" x2="633.2" y2="462.0" stroke="#555" stroke-width="0.8"/><line x1="666.4" y1="463.5" x2="666.4" y2="462.0" stroke="#555" stroke-width="0.8"/><line x1="699.6" y1="463.5" x2="699.6" y2="461.0" stroke="#555" stroke-width="0.8"/><line x1="732.8" y1="463.5" x2="732.8" y2="462.0" stroke="#555" stroke-width="0.8"/><line x1="766.0" y1="463.5" x2="766.0" y2="462.0" stroke="#555" stroke-width="0.8"/><line x1="799.1" y1="463.5" x2="799.1" y2="462.0" stroke="#555" stroke-width="0.8"/><line x1="832.3" y1="463.5" x2="832.3" y2="462.0" stroke="#555" stroke-width="0.8"/><line x1="865.5" y1="463.5" x2="865.5" y2="461.0" stroke="#555" stroke-width="0.8"/></svg><div class="lab mono" style="right:866.5px;top:441.2px;font-size:6px;letter-spacing:-0.4px;font-weight:bold;color:#333">0.25</div><div class="lab mono" style="right:866.5px;top:421.6px;font-size:6px;letter-spacing:-0.4px;font-weight:bold;color:#333">0.5</div><div class="lab mono" style="right:866.5px;top:401.9px;font-size:6px;letter-spacing:-0.4px;font-weight:bold;color:#333">0.75</div><div class="lab mono" style="right:866.5px;top:382.3px;font-size:6px;letter-spacing:-0.4px;font-weight:bold;color:#333">1</div><div class="lab mono" style="right:866.5px;top:362.7px;font-size:6px;letter-spacing:-0.4px;font-weight:bold;color:#333">1.25</div><div class="lab mono" style="right:866.5px;top:343.1px;font-size:6px;letter-spacing:-0.4px;font-weight:bold;color:#333">1.5</div><div class="lab mono" style="right:866.5px;top:323.4px;font-size:6px;letter-spacing:-0.4px;font-weight:bold;color:#333">1.75</div><svg class="a" style="left:8px;top:386px" width="9" height="8"><ellipse cx="4.5" cy="4" rx="3" ry="2.3" fill="none" stroke="#333" stroke-width="0.9"/></svg><div class="lab" style="left:21px;width:30px;text-align:center;top:465px">0</div><div class="lab" style="left:181.9px;width:40px;text-align:center;top:464.5px">5000</div><div class="lab" style="left:347.8px;width:40px;text-align:center;top:464.5px">10000</div><div class="lab" style="left:513.7px;width:40px;text-align:center;top:464.5px">15000</div><div class="lab" style="left:679.6px;width:40px;text-align:center;top:464.5px">20000</div><div class="lab" style="left:845.5px;width:40px;text-align:center;top:464.5px">25000</div><div class="lab mono" style="left:430px;width:60px;text-align:center;top:473px;font-size:6px;font-weight:bold">Freq(Hz)</div><div class="a" style="left:807px;top:324px;width:73px;height:37px;background:#fff;border:1px solid #3a3a3a;border-radius:1px"></div><div class="a" style="left:810px;top:331px;width:17px;height:1px;background:#e06060;box-shadow:0 1px 0 #e0606080"></div><div class="a" style="left:831px;top:327.5px;font-size:6px;line-height:8px;color:#333;letter-spacing:-0.45px">CH1</div><div class="a" style="left:845px;top:331px;width:17px;height:1px;background:#f4f070;box-shadow:0 1px 0 #f4f07080"></div><div class="a" style="left:866px;top:327.5px;font-size:6px;line-height:8px;color:#333;letter-spacing:-0.45px">CH4</div><div class="a" style="left:810px;top:342px;width:17px;height:1px;background:#767676;box-shadow:0 1px 0 #76767680"></div><div class="a" style="left:831px;top:339.0px;font-size:6px;line-height:8px;color:#333;letter-spacing:-0.45px">CH2</div><div class="a" style="left:845px;top:342px;width:17px;height:1px;background:#70e070;box-shadow:0 1px 0 #70e07080"></div><div class="a" style="left:866px;top:339.0px;font-size:6px;line-height:8px;color:#333;letter-spacing:-0.45px">CH5</div><div class="a" style="left:810px;top:353px;width:17px;height:1px;background:#6868c0;box-shadow:0 1px 0 #6868c080"></div><div class="a" style="left:831px;top:350.0px;font-size:6px;line-height:8px;color:#333;letter-spacing:-0.45px">CH3</div><div class="a" style="left:845px;top:353px;width:17px;height:1px;background:#6060d8;box-shadow:0 1px 0 #6060d880"></div><div class="a" style="left:866px;top:350.0px;font-size:6px;line-height:8px;color:#333;letter-spacing:-0.45px">CH6</div></body></html>
